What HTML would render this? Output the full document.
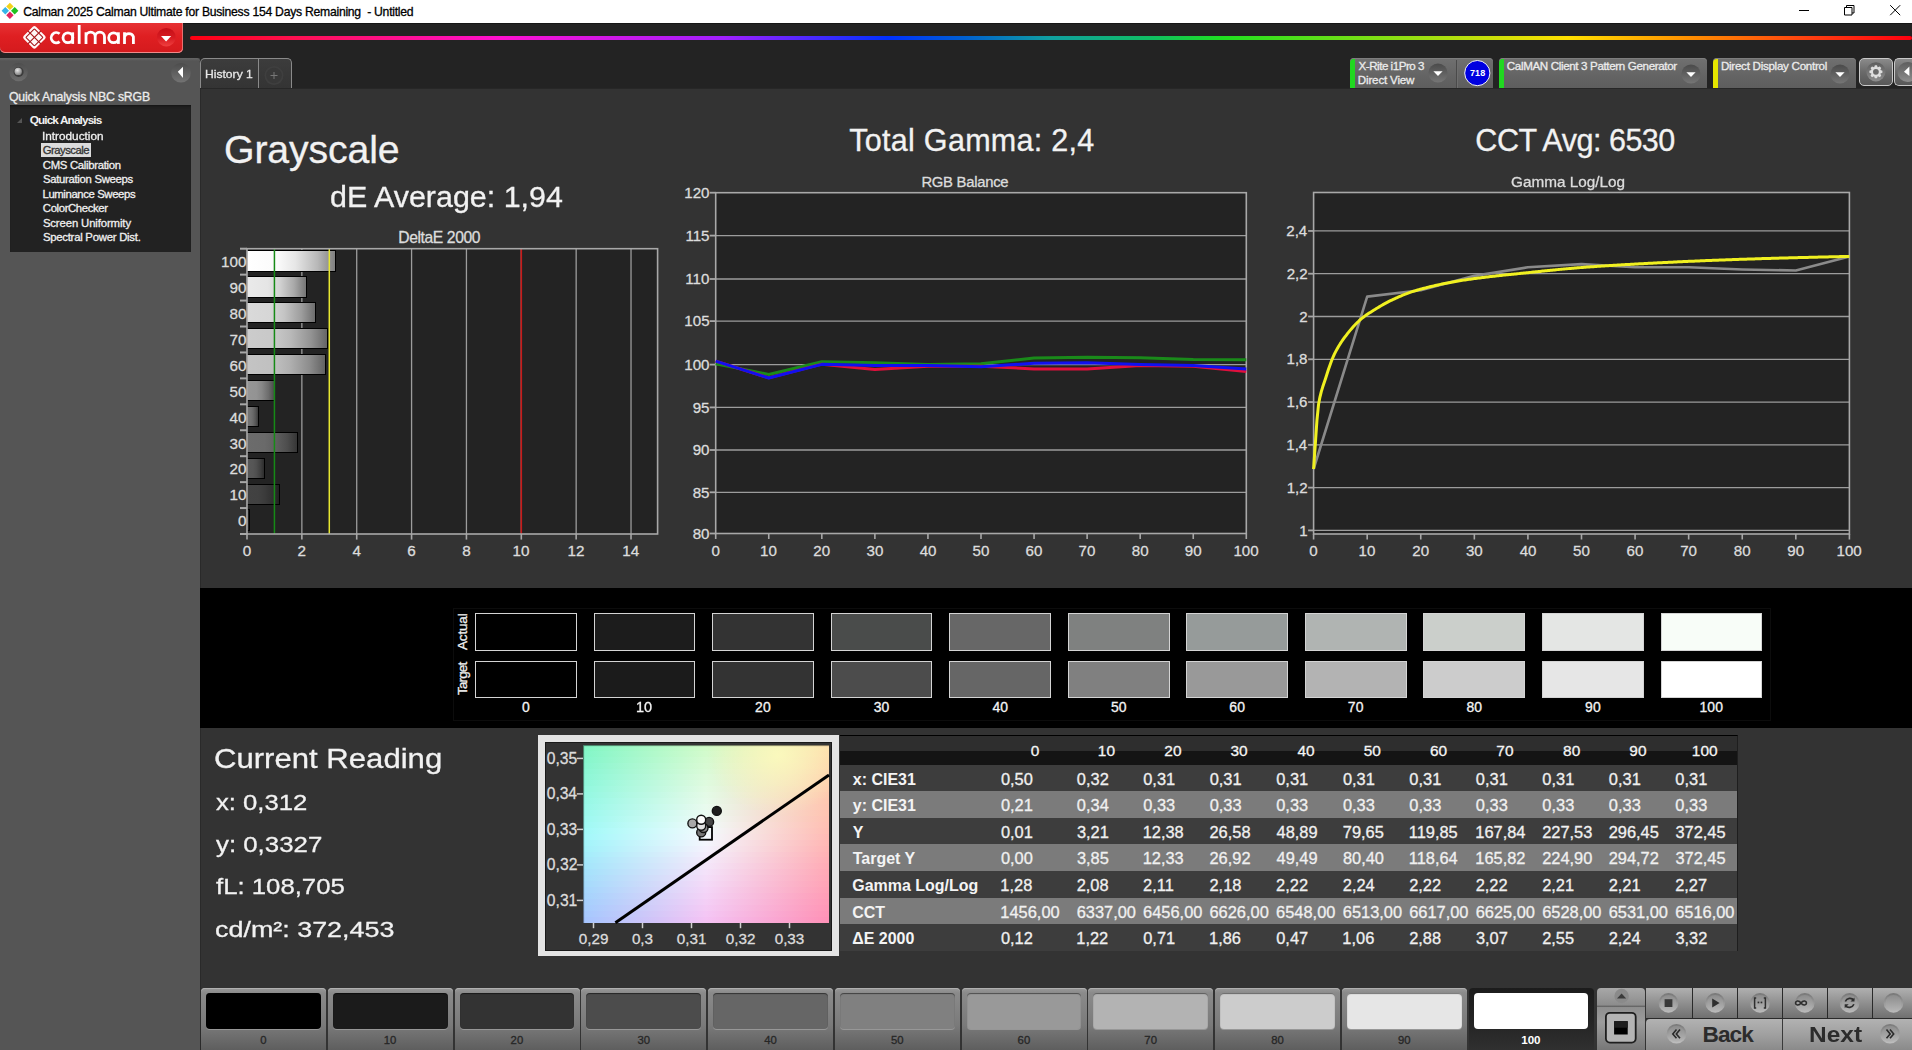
<!DOCTYPE html>
<html><head><meta charset="utf-8">
<style>
*{margin:0;padding:0;box-sizing:border-box}
html,body{width:1912px;height:1050px;overflow:hidden;background:#333;font-family:"Liberation Sans",sans-serif}
body{position:relative}
.a{position:absolute}
.t{position:absolute;white-space:pre;line-height:1;-webkit-text-stroke:0.3px currentColor}
svg{position:absolute;overflow:visible}
</style></head>
<body>

<div class="a" style="left:0;top:0;width:1912px;height:23px;background:#fff"></div>
<svg style="left:0;top:0" width="24" height="23">
<path d="M9.9 2.7 L13.6 6.4 L9.9 10.1 L6.2 6.4Z" fill="#f2d21a"/>
<path d="M5.3 7 L9 10.7 L5.3 14.4 L1.6 10.7Z" fill="#36b4e8"/>
<path d="M14.7 7 L18.4 10.7 L14.7 14.4 L11 10.7Z" fill="#1fc21f"/>
<path d="M9.9 11.6 L13.6 15.3 L9.9 19 L6.2 15.3Z" fill="#e0245e"/>
</svg>
<span class="t" style="left:23.19px;top:6px;font-size:12.20px;color:#000;letter-spacing:-0.258px">Calman 2025 Calman Ultimate for Business 154 Days Remaining  - Untitled</span>
<svg style="left:1780px;top:0" width="132" height="23">
<path d="M19 10.5 H29" stroke="#000" stroke-width="1"/>
<path d="M64.5 7.5 h7.5 v7.5 h-7.5z" fill="none" stroke="#000" stroke-width="1"/>
<path d="M66.5 7.5 v-2 h7.5 v7.5 h-2" fill="none" stroke="#000" stroke-width="1"/>
<path d="M110.2 5.2 L120.2 15.2 M120.2 5.2 L110.2 15.2" stroke="#000" stroke-width="1"/>
</svg>
<div class="a" style="left:0;top:23px;width:1912px;height:35px;background:#232323"></div>
<div class="a" style="left:0;top:23px;width:1912px;height:1px;background:#161616"></div>
<div class="a" style="left:190px;top:35.6px;width:1722px;height:4px;border-radius:2px;background:linear-gradient(90deg,#ff0010 0%,#ff1050 6%,#ff10d0 18%,#a020ff 31%,#0030ff 40.5%,#0060d0 45%,#10a0a0 50%,#10c060 56%,#20e020 60%,#a0e010 72%,#ffe000 80%,#ff9000 87%,#ff4010 94%,#ff0010 100%);filter:blur(0.5px)"></div>
<div class="a" style="left:0;top:23px;width:183px;height:30px;border-radius:0 0 5px 5px;background:linear-gradient(#e63234,#df1f22 45%,#d41a1d 100%);box-shadow:inset 0 -1px 0 #f08a8a,inset -1px 0 0 #e87070"></div>
<svg style="left:0;top:23px" width="183" height="30">
<g transform="translate(34.4,14.4) rotate(45)">
<rect x="-8.6" y="-8.6" width="17.2" height="17.2" rx="2.2" fill="#fff8f8"/>
<rect x="-6.1" y="-6.1" width="12.2" height="12.2" rx="0.8" fill="none" stroke="#a81a1e" stroke-width="1.1"/>
<path d="M0 -9.2 V9.2 M-9.2 0 H9.2" stroke="#a81a1e" stroke-width="1.2"/>
</g>
<g fill="none" stroke="#fff" stroke-width="2.8">
<path d="M59.6 10.8 A5.1 5.1 0 1 0 59.6 18.6"/>
<circle cx="67.9" cy="14.7" r="4.9"/><path d="M72.7 9.3 V20.9"/>
<path d="M79.2 2 V20.9"/>
<path d="M86 20.9 V13.8 A4.6 4.6 0 0 1 95.2 13.8 V20.9 M95.2 13.8 A4.6 4.6 0 0 1 104.5 13.8 V20.9 M86 9.3 V13.8"/>
<circle cx="113.6" cy="14.7" r="4.9"/><path d="M118.4 9.3 V20.9"/>
<path d="M124.5 20.9 V13.8 A4.7 4.7 0 0 1 133.4 13.8 V20.9 M124.5 9.3 V13.8"/>
</g>
<defs><linearGradient id="rdg" x1="0" y1="0" x2="0" y2="1"><stop offset="0" stop-color="#c40e16"/><stop offset="0.55" stop-color="#d81c22"/><stop offset="1" stop-color="#f04040"/></linearGradient></defs>
<circle cx="166.3" cy="14.2" r="9.3" fill="url(#rdg)"/>
<path d="M161 13 H171.2 L166.1 18.6Z" fill="#fff"/>
</svg>
<div class="a" style="left:0;top:58px;width:200px;height:992px;background:#555;border-radius:0 5px 0 0"></div>
<div class="a" style="left:0;top:58px;width:200px;height:3px;border-radius:0 5px 0 0;background:linear-gradient(#666,#555)"></div>
<svg style="left:0;top:58px" width="200" height="30">
<circle cx="18.6" cy="14" r="9.2" fill="url(#lpg)" opacity="0.8"/>
<circle cx="18.6" cy="14" r="5" fill="#3c3c3c"/>
<circle cx="18.2" cy="13.4" r="3.7" fill="url(#ball)"/>
<defs><linearGradient id="lpg" x1="0" y1="0" x2="0" y2="1"><stop offset="0" stop-color="#4c4c4c"/><stop offset="1" stop-color="#737373"/></linearGradient><radialGradient id="ball" cx="40%" cy="35%" r="60%"><stop offset="0" stop-color="#e8e8e8"/><stop offset="1" stop-color="#8a8a8a"/></radialGradient></defs><circle cx="181" cy="14.8" r="9.8" fill="url(#lpg)"/>
<path d="M177.8 10.5 L183 5.5 V16.9Z" fill="#fff" transform="translate(0,3.2)"/>
</svg>
<span class="t" style="left:8.95px;top:91px;font-size:12.30px;color:#ececec;letter-spacing:-0.200px">Quick Analysis NBC sRGB</span>
<div class="a" style="left:9.5px;top:105.3px;width:181px;height:146.4px;background:#222;box-shadow:inset 0 3px 3px -2px #111"></div>
<svg style="left:16px;top:117px" width="8" height="8"><path d="M1 6 L6 6 L6 1Z" fill="#555"/></svg>
<span class="t" style="left:29.73px;top:115px;font-size:11.80px;color:#f2f2f2;font-weight:700;-webkit-text-stroke:0;letter-spacing:-0.892px">Quick Analysis</span>
<div class="a" style="left:41.2px;top:143.1px;width:49.8px;height:14.1px;background:#dcdcdc"></div>
<span class="t" style="left:42.34px;top:131px;font-size:11.34px;color:#f0f0f0;transform-origin:0 0;transform:scaleX(1.0393)">Introduction</span>
<span class="t" style="left:42.83px;top:145px;font-size:11.34px;color:#333;letter-spacing:-0.537px">Grayscale</span>
<span class="t" style="left:42.83px;top:160px;font-size:11.34px;color:#f0f0f0;letter-spacing:-0.306px">CMS Calibration</span>
<span class="t" style="left:42.89px;top:174px;font-size:11.34px;color:#f0f0f0;letter-spacing:-0.298px">Saturation Sweeps</span>
<span class="t" style="left:42.49px;top:189px;font-size:11.34px;color:#f0f0f0;letter-spacing:-0.385px">Luminance Sweeps</span>
<span class="t" style="left:42.83px;top:203px;font-size:11.34px;color:#f0f0f0;letter-spacing:-0.372px">ColorChecker</span>
<span class="t" style="left:42.89px;top:218px;font-size:11.34px;color:#f0f0f0;letter-spacing:-0.116px">Screen Uniformity</span>
<span class="t" style="left:42.89px;top:232px;font-size:11.34px;color:#f0f0f0;letter-spacing:-0.247px">Spectral Power Dist.</span>
<div class="a" style="left:200px;top:58px;width:1712px;height:30px;background:#232323"></div>
<div class="a" style="left:199.8px;top:58px;width:92.2px;height:30px;border:1px solid #8a8a8a;border-bottom:none;border-radius:5px 5px 0 0;background:linear-gradient(#3c3c3c,#343434)"></div>
<div class="a" style="left:258px;top:59px;width:1px;height:29px;background:#8a8a8a"></div>
<span class="t" style="left:205.33px;top:69px;font-size:11.80px;color:#e8e8e8;transform-origin:0 0;transform:scaleX(1.0272)">History 1</span>
<svg style="left:258px;top:58px" width="34" height="30"><circle cx="16" cy="17.5" r="9.5" fill="#3f3f3f"/><circle cx="16" cy="17.5" r="7.8" fill="#383838"/><path d="M16 14 V21 M12.5 17.5 H19.5" stroke="#777" stroke-width="1"/></svg>
<div class="a" style="left:200px;top:88px;width:1712px;height:962px;background:#333"></div>
<div class="a" style="left:200px;top:88px;width:1px;height:962px;background:#2a2a2a"></div>
<div class="a" style="left:200px;top:88px;width:1712px;height:1px;background:#272727"></div>
<div class="a" style="left:1349.5px;top:58px;width:143.0px;height:30px;border-radius:4px 4px 0 0;background:linear-gradient(#707070,#646464 60%,#5e5e5e);box-shadow:inset 0 1px 0 #7e7e7e"></div><div class="a" style="left:1349.5px;top:58.5px;width:5.5px;height:29.5px;border-radius:4px 0 0 0;background:#20d820"></div>
<span class="t" style="left:1358.51px;top:60px;font-size:11.60px;color:#ececec;letter-spacing:-0.474px">X-Rite i1Pro 3</span>
<span class="t" style="left:1357.87px;top:74px;font-size:11.60px;color:#ececec;letter-spacing:-0.184px">Direct View</span>
<svg style="left:1426.5px;top:62px" width="22" height="22"><defs><linearGradient id="dd1437" x1="0" y1="0" x2="0" y2="1"><stop offset="0" stop-color="#4a4a4a"/><stop offset="1" stop-color="#767676"/></linearGradient></defs><circle cx="11" cy="11" r="9.6" fill="url(#dd1437)"/><path d="M6.4 9.3 H15.6 L11 14Z" fill="#fff"/></svg>
<div class="a" style="left:1456px;top:60px;width:1px;height:28px;background:#4a4a4a"></div>
<div class="a" style="left:1457px;top:60px;width:1px;height:28px;background:#6e6e6e"></div>
<svg style="left:1463px;top:59px" width="30" height="28"><circle cx="14.3" cy="14.1" r="12.6" fill="#0000e0" stroke="#f4f4f4" stroke-width="1"/></svg>
<span class="t" style="left:1469.94px;top:69px;font-size:9.01px;color:#fff;font-weight:700;-webkit-text-stroke:0;letter-spacing:0.113px">718</span>
<div class="a" style="left:1498.5px;top:58px;width:208.0px;height:30px;border-radius:4px 4px 0 0;background:linear-gradient(#707070,#646464 60%,#5e5e5e);box-shadow:inset 0 1px 0 #7e7e7e"></div><div class="a" style="left:1498.5px;top:58.5px;width:5.5px;height:29.5px;border-radius:4px 0 0 0;background:#20d820"></div>
<span class="t" style="left:1506.82px;top:60px;font-size:11.60px;color:#ececec;letter-spacing:-0.356px">CalMAN Client 3 Pattern Generator</span>
<svg style="left:1679.5px;top:62.599999999999994px" width="22" height="22"><defs><linearGradient id="dd1690" x1="0" y1="0" x2="0" y2="1"><stop offset="0" stop-color="#4a4a4a"/><stop offset="1" stop-color="#767676"/></linearGradient></defs><circle cx="11" cy="11" r="9.6" fill="url(#dd1690)"/><path d="M6.4 9.3 H15.6 L11 14Z" fill="#fff"/></svg>
<div class="a" style="left:1712.7px;top:58px;width:143.0999999999999px;height:30px;border-radius:4px 4px 0 0;background:linear-gradient(#707070,#646464 60%,#5e5e5e);box-shadow:inset 0 1px 0 #7e7e7e"></div><div class="a" style="left:1712.7px;top:58.5px;width:5.5px;height:29.5px;border-radius:4px 0 0 0;background:#e6e600"></div>
<span class="t" style="left:1720.97px;top:60px;font-size:11.60px;color:#ececec;letter-spacing:-0.276px">Direct Display Control</span>
<svg style="left:1829px;top:62.599999999999994px" width="22" height="22"><defs><linearGradient id="dd1840" x1="0" y1="0" x2="0" y2="1"><stop offset="0" stop-color="#4a4a4a"/><stop offset="1" stop-color="#767676"/></linearGradient></defs><circle cx="11" cy="11" r="9.6" fill="url(#dd1840)"/><path d="M6.4 9.3 H15.6 L11 14Z" fill="#fff"/></svg>
<div class="a" style="left:1859px;top:58px;width:33.5px;height:27.5px;border-radius:5px;border:1.2px solid #c8c8c8;background:linear-gradient(#8a8a8a,#6a6a6a 50%,#585858)"></div>
<svg style="left:1859px;top:58px" width="34" height="28"><defs><linearGradient id="gg" x1="0" y1="0" x2="0" y2="1"><stop offset="0" stop-color="#555"/><stop offset="1" stop-color="#9a9a9a"/></linearGradient></defs><circle cx="16.9" cy="13.8" r="9.6" fill="url(#gg)" opacity="0.8"/><path d="M15.17 9.21 L15.85 7.28 L17.95 7.28 L18.63 9.21 L18.92 9.34 L20.76 8.45 L22.25 9.94 L21.36 11.78 L21.49 12.07 L23.42 12.75 L23.42 14.85 L21.49 15.53 L21.36 15.82 L22.25 17.66 L20.76 19.15 L18.92 18.26 L18.63 18.39 L17.95 20.32 L15.85 20.32 L15.17 18.39 L14.88 18.26 L13.04 19.15 L11.55 17.66 L12.44 15.82 L12.31 15.53 L10.38 14.85 L10.38 12.75 L12.31 12.07 L12.44 11.78 L11.55 9.94 L13.04 8.45 L14.88 9.34Z" fill="#dedede"/><circle cx="16.9" cy="13.8" r="2.9" fill="#6a6a6a"/></svg>
<div class="a" style="left:1893.5px;top:58px;width:22px;height:27.5px;border-radius:5px 0 0 5px;border:1.2px solid #c8c8c8;border-right:none;background:linear-gradient(#8a8a8a,#6a6a6a 50%,#585858)"></div>
<svg style="left:1893px;top:58px" width="19" height="28"><circle cx="14.5" cy="14" r="10" fill="url(#gg)" opacity="0.8"/><path d="M11 13.8 L16.4 8.5 V18Z" fill="#fff"/></svg>
<span class="t" style="left:224.04px;top:130px;font-size:39.24px;color:#f2f2f2;letter-spacing:-0.133px">Grayscale</span>
<span class="t" style="left:329.68px;top:182px;font-size:29.65px;color:#f2f2f2;transform-origin:0 0;transform:scaleX(1.0264)">dE Average: 1,94</span>
<span class="t" style="left:849.29px;top:125px;font-size:30.52px;color:#f2f2f2;letter-spacing:0.276px">Total Gamma: 2,4</span>
<span class="t" style="left:1475.37px;top:125px;font-size:30.52px;color:#f2f2f2;letter-spacing:-0.490px">CCT Avg: 6530</span>
<span class="t" style="left:398.29px;top:230px;font-size:15.70px;color:#dcdcdc;letter-spacing:-0.411px">DeltaE 2000</span>
<svg style="left:0;top:0" width="1912" height="1050"><rect x="247.0" y="248.7" width="410.6" height="285.3" fill="#232323"/><path d="M301.86 248.7 V534.0" stroke="#9c9c9c" stroke-width="1.3"/><path d="M356.72 248.7 V534.0" stroke="#9c9c9c" stroke-width="1.3"/><path d="M411.58 248.7 V534.0" stroke="#9c9c9c" stroke-width="1.3"/><path d="M466.44 248.7 V534.0" stroke="#9c9c9c" stroke-width="1.3"/><path d="M521.30 248.7 V534.0" stroke="#9c9c9c" stroke-width="1.3"/><path d="M576.16 248.7 V534.0" stroke="#9c9c9c" stroke-width="1.3"/><path d="M631.02 248.7 V534.0" stroke="#9c9c9c" stroke-width="1.3"/></svg>
<div class="a" style="left:247.0px;top:509.46px;width:2.70px;height:21.5px;border:1.8px solid #000;border-left:none;background:linear-gradient(90deg,rgb(40,40,40) 0%,rgb(39,39,39) 35%,rgb(36,36,36) 55%,rgb(29,29,29) 80%,rgb(20,20,20) 100%)"></div>
<div class="a" style="left:247.0px;top:483.53px;width:32.50px;height:21.5px;border:1.8px solid #000;border-left:none;background:linear-gradient(90deg,rgb(66,66,66) 0%,rgb(65,65,65) 35%,rgb(59,59,59) 55%,rgb(48,48,48) 80%,rgb(33,33,33) 100%)"></div>
<div class="a" style="left:247.0px;top:457.59px;width:18.10px;height:21.5px;border:1.8px solid #000;border-left:none;background:linear-gradient(90deg,rgb(88,88,88) 0%,rgb(86,86,86) 35%,rgb(79,79,79) 55%,rgb(63,63,63) 80%,rgb(44,44,44) 100%)"></div>
<div class="a" style="left:247.0px;top:431.65px;width:50.70px;height:21.5px;border:1.8px solid #000;border-left:none;background:linear-gradient(90deg,rgb(108,108,108) 0%,rgb(106,106,106) 35%,rgb(97,97,97) 55%,rgb(78,78,78) 80%,rgb(54,54,54) 100%)"></div>
<div class="a" style="left:247.0px;top:405.72px;width:12.30px;height:21.5px;border:1.8px solid #000;border-left:none;background:linear-gradient(90deg,rgb(116,116,116) 0%,rgb(114,114,114) 35%,rgb(104,104,104) 55%,rgb(84,84,84) 80%,rgb(58,58,58) 100%)"></div>
<div class="a" style="left:247.0px;top:379.78px;width:27.70px;height:21.5px;border:1.8px solid #000;border-left:none;background:linear-gradient(90deg,rgb(150,150,150) 0%,rgb(147,147,147) 35%,rgb(135,135,135) 55%,rgb(108,108,108) 80%,rgb(75,75,75) 100%)"></div>
<div class="a" style="left:247.0px;top:353.85px;width:78.50px;height:21.5px;border:1.8px solid #000;border-left:none;background:linear-gradient(90deg,rgb(196,196,196) 0%,rgb(192,192,192) 35%,rgb(176,176,176) 55%,rgb(141,141,141) 80%,rgb(98,98,98) 100%)"></div>
<div class="a" style="left:247.0px;top:327.91px;width:80.50px;height:21.5px;border:1.8px solid #000;border-left:none;background:linear-gradient(90deg,rgb(204,204,204) 0%,rgb(200,200,200) 35%,rgb(184,184,184) 55%,rgb(147,147,147) 80%,rgb(102,102,102) 100%)"></div>
<div class="a" style="left:247.0px;top:301.97px;width:68.50px;height:21.5px;border:1.8px solid #000;border-left:none;background:linear-gradient(90deg,rgb(218,218,218) 0%,rgb(214,214,214) 35%,rgb(196,196,196) 55%,rgb(157,157,157) 80%,rgb(109,109,109) 100%)"></div>
<div class="a" style="left:247.0px;top:276.04px;width:60.30px;height:21.5px;border:1.8px solid #000;border-left:none;background:linear-gradient(90deg,rgb(234,234,234) 0%,rgb(229,229,229) 35%,rgb(211,211,211) 55%,rgb(168,168,168) 80%,rgb(117,117,117) 100%)"></div>
<div class="a" style="left:247.0px;top:250.10px;width:89.10px;height:21.5px;border:1.8px solid #000;border-left:none;background:linear-gradient(90deg,rgb(255,255,255) 0%,rgb(250,250,250) 35%,rgb(230,230,230) 55%,rgb(184,184,184) 80%,rgb(128,128,128) 100%)"></div>
<svg style="left:0;top:0" width="1912" height="1050"><path d="M274.43 248.7 V534.0" stroke="#168a16" stroke-width="1.5"/><path d="M329.29 248.7 V534.0" stroke="#e8e830" stroke-width="1.5"/><path d="M521.30 248.7 V534.0" stroke="#c81a1a" stroke-width="1.6"/><rect x="247.0" y="248.7" width="410.6" height="285.3" fill="none" stroke="#a8a8a8" stroke-width="1.6"/><path d="M240.0 534.00 H247.0" stroke="#a8a8a8" stroke-width="2"/><path d="M240.0 508.06 H247.0" stroke="#a8a8a8" stroke-width="2"/><path d="M240.0 482.13 H247.0" stroke="#a8a8a8" stroke-width="2"/><path d="M240.0 456.19 H247.0" stroke="#a8a8a8" stroke-width="2"/><path d="M240.0 430.25 H247.0" stroke="#a8a8a8" stroke-width="2"/><path d="M240.0 404.32 H247.0" stroke="#a8a8a8" stroke-width="2"/><path d="M240.0 378.38 H247.0" stroke="#a8a8a8" stroke-width="2"/><path d="M240.0 352.45 H247.0" stroke="#a8a8a8" stroke-width="2"/><path d="M240.0 326.51 H247.0" stroke="#a8a8a8" stroke-width="2"/><path d="M240.0 300.57 H247.0" stroke="#a8a8a8" stroke-width="2"/><path d="M240.0 274.64 H247.0" stroke="#a8a8a8" stroke-width="2"/><path d="M240.0 248.70 H247.0" stroke="#a8a8a8" stroke-width="2"/><path d="M247.00 534.0 V539.6" stroke="#a8a8a8" stroke-width="1.6"/><path d="M301.86 534.0 V539.6" stroke="#a8a8a8" stroke-width="1.6"/><path d="M356.72 534.0 V539.6" stroke="#a8a8a8" stroke-width="1.6"/><path d="M411.58 534.0 V539.6" stroke="#a8a8a8" stroke-width="1.6"/><path d="M466.44 534.0 V539.6" stroke="#a8a8a8" stroke-width="1.6"/><path d="M521.30 534.0 V539.6" stroke="#a8a8a8" stroke-width="1.6"/><path d="M576.16 534.0 V539.6" stroke="#a8a8a8" stroke-width="1.6"/><path d="M631.02 534.0 V539.6" stroke="#a8a8a8" stroke-width="1.6"/></svg>
<span class="t" style="left:238.06px;top:513px;font-size:15.26px;color:#dcdcdc">0</span>
<span class="t" style="left:229.59px;top:487px;font-size:15.26px;color:#dcdcdc">10</span>
<span class="t" style="left:229.59px;top:461px;font-size:15.26px;color:#dcdcdc">20</span>
<span class="t" style="left:229.59px;top:436px;font-size:15.26px;color:#dcdcdc">30</span>
<span class="t" style="left:229.59px;top:410px;font-size:15.26px;color:#dcdcdc">40</span>
<span class="t" style="left:229.59px;top:384px;font-size:15.26px;color:#dcdcdc">50</span>
<span class="t" style="left:229.59px;top:358px;font-size:15.26px;color:#dcdcdc">60</span>
<span class="t" style="left:229.59px;top:332px;font-size:15.26px;color:#dcdcdc">70</span>
<span class="t" style="left:229.59px;top:306px;font-size:15.26px;color:#dcdcdc">80</span>
<span class="t" style="left:229.59px;top:280px;font-size:15.26px;color:#dcdcdc">90</span>
<span class="t" style="left:221.12px;top:254px;font-size:15.26px;color:#dcdcdc">100</span>
<span class="t" style="left:242.73px;top:543px;font-size:15.26px;color:#dcdcdc">0</span>
<span class="t" style="left:297.62px;top:543px;font-size:15.26px;color:#dcdcdc">2</span>
<span class="t" style="left:352.52px;top:543px;font-size:15.26px;color:#dcdcdc">4</span>
<span class="t" style="left:407.27px;top:543px;font-size:15.26px;color:#dcdcdc">6</span>
<span class="t" style="left:462.20px;top:543px;font-size:15.26px;color:#dcdcdc">8</span>
<span class="t" style="left:512.52px;top:543px;font-size:15.26px;color:#dcdcdc">10</span>
<span class="t" style="left:567.50px;top:543px;font-size:15.26px;color:#dcdcdc">12</span>
<span class="t" style="left:622.17px;top:543px;font-size:15.26px;color:#dcdcdc">14</span>
<span class="t" style="left:921.41px;top:175px;font-size:14.83px;color:#dcdcdc;letter-spacing:-0.266px">RGB Balance</span>
<svg style="left:0;top:0" width="1912" height="1050"><rect x="715.7" y="192.7" width="530.5999999999999" height="340.8" fill="#232323"/><path d="M715.7 492.30 H1246.3" stroke="#9c9c9c" stroke-width="1.3"/><path d="M715.7 450.00 H1246.3" stroke="#9c9c9c" stroke-width="1.3"/><path d="M715.7 407.40 H1246.3" stroke="#9c9c9c" stroke-width="1.3"/><path d="M715.7 364.60 H1246.3" stroke="#9c9c9c" stroke-width="1.3"/><path d="M715.7 321.10 H1246.3" stroke="#9c9c9c" stroke-width="1.3"/><path d="M715.7 279.00 H1246.3" stroke="#9c9c9c" stroke-width="1.3"/><path d="M715.7 235.60 H1246.3" stroke="#9c9c9c" stroke-width="1.3"/><rect x="715.7" y="192.7" width="530.5999999999999" height="340.8" fill="none" stroke="#a8a8a8" stroke-width="1.6"/><path d="M709.7 533.50 H715.7" stroke="#a8a8a8" stroke-width="1.8"/><path d="M709.7 492.30 H715.7" stroke="#a8a8a8" stroke-width="1.8"/><path d="M709.7 450.00 H715.7" stroke="#a8a8a8" stroke-width="1.8"/><path d="M709.7 407.40 H715.7" stroke="#a8a8a8" stroke-width="1.8"/><path d="M709.7 364.60 H715.7" stroke="#a8a8a8" stroke-width="1.8"/><path d="M709.7 321.10 H715.7" stroke="#a8a8a8" stroke-width="1.8"/><path d="M709.7 279.00 H715.7" stroke="#a8a8a8" stroke-width="1.8"/><path d="M709.7 235.60 H715.7" stroke="#a8a8a8" stroke-width="1.8"/><path d="M709.7 192.70 H715.7" stroke="#a8a8a8" stroke-width="1.8"/><path d="M715.70 533.5 V539.0" stroke="#a8a8a8" stroke-width="1.6"/><path d="M768.76 533.5 V539.0" stroke="#a8a8a8" stroke-width="1.6"/><path d="M821.82 533.5 V539.0" stroke="#a8a8a8" stroke-width="1.6"/><path d="M874.88 533.5 V539.0" stroke="#a8a8a8" stroke-width="1.6"/><path d="M927.94 533.5 V539.0" stroke="#a8a8a8" stroke-width="1.6"/><path d="M981.00 533.5 V539.0" stroke="#a8a8a8" stroke-width="1.6"/><path d="M1034.06 533.5 V539.0" stroke="#a8a8a8" stroke-width="1.6"/><path d="M1087.12 533.5 V539.0" stroke="#a8a8a8" stroke-width="1.6"/><path d="M1140.18 533.5 V539.0" stroke="#a8a8a8" stroke-width="1.6"/><path d="M1193.24 533.5 V539.0" stroke="#a8a8a8" stroke-width="1.6"/><path d="M1246.30 533.5 V539.0" stroke="#a8a8a8" stroke-width="1.6"/><path d="M715.70 363.73 L768.76 374.44 L821.82 361.73 L874.88 362.86 L927.94 364.60 L981.00 363.73 L1034.06 358.08 L1087.12 357.21 L1140.18 357.64 L1193.24 359.38 L1246.30 359.82" fill="none" stroke="#1a8a1a" stroke-width="3" stroke-linejoin="round"/><path d="M715.70 361.12 L768.76 377.87 L821.82 364.17 L874.88 369.39 L927.94 366.31 L981.00 366.31 L1034.06 368.88 L1087.12 368.88 L1140.18 365.46 L1193.24 366.31 L1246.30 371.45" fill="none" stroke="#e0103c" stroke-width="3" stroke-linejoin="round"/><path d="M715.70 361.12 L768.76 378.04 L821.82 364.34 L874.88 365.46 L927.94 365.46 L981.00 366.74 L1034.06 363.29 L1087.12 362.86 L1140.18 364.60 L1193.24 365.46 L1246.30 368.88" fill="none" stroke="#1010f0" stroke-width="3" stroke-linejoin="round"/></svg>
<span class="t" style="left:692.65px;top:526px;font-size:15.12px;color:#dcdcdc">80</span>
<span class="t" style="left:692.73px;top:485px;font-size:15.12px;color:#dcdcdc">85</span>
<span class="t" style="left:692.65px;top:442px;font-size:15.12px;color:#dcdcdc">90</span>
<span class="t" style="left:692.73px;top:400px;font-size:15.12px;color:#dcdcdc">95</span>
<span class="t" style="left:684.26px;top:357px;font-size:15.12px;color:#dcdcdc">100</span>
<span class="t" style="left:684.34px;top:313px;font-size:15.12px;color:#dcdcdc">105</span>
<span class="t" style="left:685.32px;top:271px;font-size:15.12px;color:#dcdcdc">110</span>
<span class="t" style="left:685.39px;top:228px;font-size:15.12px;color:#dcdcdc">115</span>
<span class="t" style="left:684.26px;top:185px;font-size:15.12px;color:#dcdcdc">120</span>
<span class="t" style="left:711.47px;top:543px;font-size:15.12px;color:#dcdcdc">0</span>
<span class="t" style="left:760.07px;top:543px;font-size:15.12px;color:#dcdcdc">10</span>
<span class="t" style="left:813.32px;top:543px;font-size:15.12px;color:#dcdcdc">20</span>
<span class="t" style="left:866.49px;top:543px;font-size:15.12px;color:#dcdcdc">30</span>
<span class="t" style="left:919.66px;top:543px;font-size:15.12px;color:#dcdcdc">40</span>
<span class="t" style="left:972.57px;top:543px;font-size:15.12px;color:#dcdcdc">50</span>
<span class="t" style="left:1025.56px;top:543px;font-size:15.12px;color:#dcdcdc">60</span>
<span class="t" style="left:1078.62px;top:543px;font-size:15.12px;color:#dcdcdc">70</span>
<span class="t" style="left:1131.75px;top:543px;font-size:15.12px;color:#dcdcdc">80</span>
<span class="t" style="left:1184.77px;top:543px;font-size:15.12px;color:#dcdcdc">90</span>
<span class="t" style="left:1233.41px;top:543px;font-size:15.12px;color:#dcdcdc">100</span>
<span class="t" style="left:1511.43px;top:175px;font-size:14.83px;color:#dcdcdc;transform-origin:0 0;transform:scaleX(1.0329)">Gamma Log/Log</span>
<svg style="left:0;top:0" width="1912" height="1050"><rect x="1313.6" y="192.5" width="535.8000000000002" height="341.5" fill="#232323"/><path d="M1313.6 530.40 H1849.4" stroke="#9c9c9c" stroke-width="1.3"/><path d="M1313.6 487.62 H1849.4" stroke="#9c9c9c" stroke-width="1.3"/><path d="M1313.6 444.84 H1849.4" stroke="#9c9c9c" stroke-width="1.3"/><path d="M1313.6 402.06 H1849.4" stroke="#9c9c9c" stroke-width="1.3"/><path d="M1313.6 359.28 H1849.4" stroke="#9c9c9c" stroke-width="1.3"/><path d="M1313.6 316.50 H1849.4" stroke="#9c9c9c" stroke-width="1.3"/><path d="M1313.6 273.72 H1849.4" stroke="#9c9c9c" stroke-width="1.3"/><path d="M1313.6 230.94 H1849.4" stroke="#9c9c9c" stroke-width="1.3"/><rect x="1313.6" y="192.5" width="535.8000000000002" height="341.5" fill="none" stroke="#a8a8a8" stroke-width="1.6"/><path d="M1308.1 530.40 H1313.6" stroke="#a8a8a8" stroke-width="1.8"/><path d="M1308.1 487.62 H1313.6" stroke="#a8a8a8" stroke-width="1.8"/><path d="M1308.1 444.84 H1313.6" stroke="#a8a8a8" stroke-width="1.8"/><path d="M1308.1 402.06 H1313.6" stroke="#a8a8a8" stroke-width="1.8"/><path d="M1308.1 359.28 H1313.6" stroke="#a8a8a8" stroke-width="1.8"/><path d="M1308.1 316.50 H1313.6" stroke="#a8a8a8" stroke-width="1.8"/><path d="M1308.1 273.72 H1313.6" stroke="#a8a8a8" stroke-width="1.8"/><path d="M1308.1 230.94 H1313.6" stroke="#a8a8a8" stroke-width="1.8"/><path d="M1313.60 534.0 V539.5" stroke="#a8a8a8" stroke-width="1.6"/><path d="M1367.18 534.0 V539.5" stroke="#a8a8a8" stroke-width="1.6"/><path d="M1420.76 534.0 V539.5" stroke="#a8a8a8" stroke-width="1.6"/><path d="M1474.34 534.0 V539.5" stroke="#a8a8a8" stroke-width="1.6"/><path d="M1527.92 534.0 V539.5" stroke="#a8a8a8" stroke-width="1.6"/><path d="M1581.50 534.0 V539.5" stroke="#a8a8a8" stroke-width="1.6"/><path d="M1635.08 534.0 V539.5" stroke="#a8a8a8" stroke-width="1.6"/><path d="M1688.66 534.0 V539.5" stroke="#a8a8a8" stroke-width="1.6"/><path d="M1742.24 534.0 V539.5" stroke="#a8a8a8" stroke-width="1.6"/><path d="M1795.82 534.0 V539.5" stroke="#a8a8a8" stroke-width="1.6"/><path d="M1849.40 534.0 V539.5" stroke="#a8a8a8" stroke-width="1.6"/><path d="M1313.60 469.01 L1367.18 296.61 L1420.76 290.19 L1474.34 275.86 L1527.92 267.30 L1581.50 264.09 L1635.08 267.30 L1688.66 267.30 L1742.24 269.44 L1795.82 270.51 L1849.40 256.39" fill="none" stroke="#8a8a8a" stroke-width="2.6" stroke-linejoin="round"/><path d="M1313.60 469.01 L1315.26 444.80 L1316.92 420.59 L1318.58 404.20 L1319.94 397.09 L1321.30 391.57 L1322.67 387.08 L1324.03 383.06 L1325.39 378.96 L1326.91 374.18 L1328.42 369.56 L1329.94 365.15 L1331.46 361.03 L1332.98 357.27 L1334.50 353.93 L1335.94 351.10 L1337.38 348.46 L1338.82 345.99 L1340.26 343.67 L1341.70 341.49 L1343.14 339.42 L1344.58 337.44 L1346.02 335.54 L1347.45 333.69 L1348.89 331.89 L1350.33 330.15 L1351.76 328.47 L1353.20 326.84 L1354.64 325.28 L1356.07 323.77 L1357.51 322.34 L1358.95 320.96 L1360.39 319.66 L1361.82 318.43 L1363.30 317.24 L1364.77 316.12 L1366.24 315.06 L1367.72 314.05 L1369.19 313.08 L1370.66 312.14 L1372.14 311.22 L1373.61 310.30 L1375.01 309.42 L1376.41 308.56 L1377.81 307.71 L1379.21 306.86 L1380.62 306.03 L1382.02 305.21 L1383.42 304.41 L1384.82 303.63 L1386.22 302.87 L1387.62 302.12 L1389.02 301.40 L1390.43 300.70 L1391.83 300.03 L1393.18 299.40 L1394.54 298.77 L1395.89 298.15 L1397.25 297.54 L1398.60 296.93 L1399.96 296.34 L1401.31 295.77 L1402.67 295.20 L1404.02 294.65 L1405.38 294.11 L1406.73 293.59 L1408.09 293.08 L1409.45 292.59 L1410.80 292.12 L1412.16 291.67 L1413.51 291.24 L1414.87 290.83 L1416.22 290.44 L1417.57 290.05 L1418.93 289.67 L1420.28 289.29 L1421.64 288.92 L1422.99 288.56 L1424.35 288.20 L1425.70 287.85 L1427.06 287.50 L1428.41 287.16 L1429.76 286.83 L1431.12 286.50 L1432.47 286.17 L1433.83 285.86 L1435.18 285.54 L1436.54 285.24 L1437.89 284.93 L1439.25 284.64 L1440.60 284.35 L1441.95 284.06 L1443.31 283.78 L1444.66 283.50 L1446.02 283.23 L1447.37 282.96 L1448.73 282.70 L1450.08 282.45 L1451.43 282.20 L1452.79 281.95 L1454.14 281.71 L1455.50 281.47 L1456.85 281.24 L1458.21 281.01 L1459.56 280.78 L1460.92 280.56 L1462.27 280.35 L1463.62 280.14 L1464.96 279.93 L1466.30 279.73 L1467.64 279.53 L1468.98 279.34 L1470.32 279.15 L1471.66 278.96 L1473.00 278.77 L1474.34 278.59 L1475.68 278.41 L1477.02 278.23 L1478.36 278.06 L1479.70 277.89 L1481.04 277.72 L1482.38 277.55 L1483.72 277.39 L1485.06 277.23 L1486.40 277.07 L1487.73 276.91 L1489.07 276.75 L1490.41 276.60 L1491.75 276.44 L1493.09 276.29 L1494.43 276.14 L1495.77 276.00 L1497.11 275.85 L1498.45 275.70 L1499.79 275.56 L1501.13 275.42 L1502.47 275.28 L1503.81 275.13 L1505.15 274.99 L1506.49 274.86 L1507.83 274.72 L1509.17 274.58 L1510.51 274.44 L1511.85 274.30 L1513.19 274.17 L1514.53 274.03 L1515.86 273.89 L1517.20 273.76 L1518.54 273.62 L1519.88 273.48 L1521.22 273.34 L1522.56 273.21 L1523.90 273.07 L1525.24 272.93 L1526.58 272.79 L1527.92 272.65 L1529.26 272.51 L1530.60 272.37 L1531.94 272.23 L1533.28 272.09 L1534.62 271.95 L1535.96 271.81 L1537.30 271.67 L1538.64 271.53 L1539.98 271.39 L1541.32 271.25 L1542.65 271.11 L1543.99 270.97 L1545.33 270.84 L1546.67 270.70 L1548.01 270.56 L1549.35 270.43 L1550.69 270.29 L1552.03 270.16 L1553.37 270.03 L1554.71 269.90 L1556.05 269.76 L1557.39 269.63 L1558.73 269.50 L1560.07 269.38 L1561.41 269.25 L1562.75 269.12 L1564.09 269.00 L1565.43 268.88 L1566.77 268.75 L1568.11 268.63 L1569.44 268.51 L1570.78 268.40 L1572.12 268.28 L1573.46 268.17 L1574.80 268.05 L1576.14 267.94 L1577.48 267.83 L1578.82 267.73 L1580.16 267.62 L1581.50 267.52 L1582.84 267.41 L1584.18 267.31 L1585.52 267.21 L1586.86 267.12 L1588.20 267.02 L1589.54 266.92 L1590.88 266.83 L1592.22 266.73 L1593.56 266.64 L1594.89 266.54 L1596.23 266.45 L1597.57 266.36 L1598.91 266.27 L1600.25 266.18 L1601.59 266.09 L1602.93 266.01 L1604.27 265.92 L1605.61 265.83 L1606.95 265.75 L1608.29 265.66 L1609.63 265.58 L1610.97 265.50 L1612.31 265.42 L1613.65 265.33 L1614.99 265.25 L1616.33 265.17 L1617.67 265.09 L1619.01 265.01 L1620.35 264.93 L1621.68 264.86 L1623.02 264.78 L1624.36 264.70 L1625.70 264.62 L1627.04 264.55 L1628.38 264.47 L1629.72 264.39 L1631.06 264.32 L1632.40 264.24 L1633.74 264.17 L1635.08 264.09 L1636.42 264.02 L1637.76 263.95 L1639.10 263.87 L1640.44 263.80 L1641.78 263.73 L1643.12 263.65 L1644.46 263.58 L1645.80 263.51 L1647.14 263.44 L1648.48 263.36 L1649.81 263.29 L1651.15 263.22 L1652.49 263.15 L1653.83 263.08 L1655.17 263.01 L1656.51 262.94 L1657.85 262.87 L1659.19 262.80 L1660.53 262.73 L1661.87 262.66 L1663.21 262.60 L1664.55 262.53 L1665.89 262.46 L1667.23 262.39 L1668.57 262.33 L1669.91 262.26 L1671.25 262.19 L1672.59 262.13 L1673.93 262.06 L1675.27 262.00 L1676.60 261.93 L1677.94 261.87 L1679.28 261.81 L1680.62 261.74 L1681.96 261.68 L1683.30 261.62 L1684.64 261.55 L1685.98 261.49 L1687.32 261.43 L1688.66 261.37 L1690.00 261.31 L1691.34 261.25 L1692.68 261.19 L1694.02 261.13 L1695.36 261.07 L1696.70 261.01 L1698.04 260.96 L1699.38 260.90 L1700.72 260.84 L1702.06 260.79 L1703.39 260.73 L1704.73 260.68 L1706.07 260.62 L1707.41 260.57 L1708.75 260.51 L1710.09 260.46 L1711.43 260.41 L1712.77 260.35 L1714.11 260.30 L1715.45 260.25 L1716.79 260.20 L1718.13 260.14 L1719.47 260.09 L1720.81 260.04 L1722.15 259.99 L1723.49 259.94 L1724.83 259.89 L1726.17 259.84 L1727.51 259.79 L1728.85 259.75 L1730.18 259.70 L1731.52 259.65 L1732.86 259.60 L1734.20 259.55 L1735.54 259.51 L1736.88 259.46 L1738.22 259.41 L1739.56 259.37 L1740.90 259.32 L1742.24 259.27 L1743.58 259.23 L1744.92 259.18 L1746.26 259.14 L1747.60 259.09 L1748.94 259.05 L1750.28 259.01 L1751.62 258.96 L1752.96 258.92 L1754.30 258.88 L1755.63 258.83 L1756.97 258.79 L1758.31 258.75 L1759.65 258.71 L1760.99 258.66 L1762.33 258.62 L1763.67 258.58 L1765.01 258.54 L1766.35 258.50 L1767.69 258.46 L1769.03 258.42 L1770.37 258.38 L1771.71 258.34 L1773.05 258.30 L1774.39 258.26 L1775.73 258.22 L1777.07 258.18 L1778.41 258.14 L1779.75 258.11 L1781.09 258.07 L1782.43 258.03 L1783.76 257.99 L1785.10 257.96 L1786.44 257.92 L1787.78 257.88 L1789.12 257.85 L1790.46 257.81 L1791.80 257.78 L1793.14 257.74 L1794.48 257.71 L1795.82 257.67 L1797.16 257.64 L1798.50 257.61 L1799.84 257.57 L1801.18 257.54 L1802.52 257.51 L1803.86 257.47 L1805.20 257.44 L1806.54 257.41 L1807.88 257.38 L1809.22 257.34 L1810.55 257.31 L1811.89 257.28 L1813.23 257.25 L1814.57 257.22 L1815.91 257.18 L1817.25 257.15 L1818.59 257.12 L1819.93 257.09 L1821.27 257.06 L1822.61 257.03 L1823.95 257.00 L1825.29 256.97 L1826.63 256.93 L1827.97 256.90 L1829.31 256.87 L1830.65 256.84 L1831.99 256.81 L1833.33 256.78 L1834.67 256.75 L1836.01 256.72 L1837.34 256.68 L1838.68 256.65 L1840.02 256.62 L1841.36 256.59 L1842.70 256.56 L1844.04 256.52 L1845.38 256.49 L1846.72 256.46 L1848.06 256.43 L1849.40 256.39" fill="none" stroke="#f0f020" stroke-width="3" stroke-linejoin="round"/></svg>
<span class="t" style="left:1299.19px;top:523px;font-size:15.12px;color:#dcdcdc">1</span>
<span class="t" style="left:1286.64px;top:480px;font-size:15.12px;color:#dcdcdc">1,2</span>
<span class="t" style="left:1286.27px;top:437px;font-size:15.12px;color:#dcdcdc">1,4</span>
<span class="t" style="left:1286.49px;top:394px;font-size:15.12px;color:#dcdcdc">1,6</span>
<span class="t" style="left:1286.49px;top:351px;font-size:15.12px;color:#dcdcdc">1,8</span>
<span class="t" style="left:1299.27px;top:309px;font-size:15.12px;color:#dcdcdc">2</span>
<span class="t" style="left:1286.64px;top:266px;font-size:15.12px;color:#dcdcdc">2,2</span>
<span class="t" style="left:1286.27px;top:223px;font-size:15.12px;color:#dcdcdc">2,4</span>
<span class="t" style="left:1309.37px;top:543px;font-size:15.12px;color:#dcdcdc">0</span>
<span class="t" style="left:1358.49px;top:543px;font-size:15.12px;color:#dcdcdc">10</span>
<span class="t" style="left:1412.26px;top:543px;font-size:15.12px;color:#dcdcdc">20</span>
<span class="t" style="left:1465.95px;top:543px;font-size:15.12px;color:#dcdcdc">30</span>
<span class="t" style="left:1519.64px;top:543px;font-size:15.12px;color:#dcdcdc">40</span>
<span class="t" style="left:1573.07px;top:543px;font-size:15.12px;color:#dcdcdc">50</span>
<span class="t" style="left:1626.58px;top:543px;font-size:15.12px;color:#dcdcdc">60</span>
<span class="t" style="left:1680.16px;top:543px;font-size:15.12px;color:#dcdcdc">70</span>
<span class="t" style="left:1733.81px;top:543px;font-size:15.12px;color:#dcdcdc">80</span>
<span class="t" style="left:1787.35px;top:543px;font-size:15.12px;color:#dcdcdc">90</span>
<span class="t" style="left:1836.51px;top:543px;font-size:15.12px;color:#dcdcdc">100</span>
<div class="a" style="left:200px;top:587.5px;width:1712px;height:140px;background:#000"></div>
<div class="a" style="left:453px;top:607.5px;width:1318px;height:113px;border:1px solid #0c0c0c"></div>
<div class="a" style="left:475.00px;top:613.3px;width:101.8px;height:37.4px;border:1.5px solid #d4d4d4;background:#000000"></div>
<div class="a" style="left:475.00px;top:661.3px;width:101.8px;height:36.4px;border:1.5px solid #d4d4d4;background:#000000"></div>
<span class="t" style="left:521.99px;top:701px;font-size:13.95px;color:#f4f4f4">0</span>
<div class="a" style="left:593.56px;top:613.3px;width:101.8px;height:37.4px;border:1.5px solid #d4d4d4;background:#1c1c1c"></div>
<div class="a" style="left:593.56px;top:661.3px;width:101.8px;height:36.4px;border:1.5px solid #d4d4d4;background:#1b1b1b"></div>
<span class="t" style="left:636.12px;top:701px;font-size:13.95px;color:#f4f4f4;transform-origin:0 0;transform:scaleX(1.0392)">10</span>
<div class="a" style="left:712.12px;top:613.3px;width:101.8px;height:37.4px;border:1.5px solid #d4d4d4;background:#333333"></div>
<div class="a" style="left:712.12px;top:661.3px;width:101.8px;height:36.4px;border:1.5px solid #d4d4d4;background:#333333"></div>
<span class="t" style="left:755.07px;top:701px;font-size:13.95px;color:#f4f4f4;letter-spacing:0.198px">20</span>
<div class="a" style="left:830.68px;top:613.3px;width:101.8px;height:37.4px;border:1.5px solid #d4d4d4;background:#4a4c4b"></div>
<div class="a" style="left:830.68px;top:661.3px;width:101.8px;height:36.4px;border:1.5px solid #d4d4d4;background:#4c4c4c"></div>
<span class="t" style="left:873.84px;top:701px;font-size:13.95px;color:#f4f4f4;letter-spacing:-0.012px">30</span>
<div class="a" style="left:949.24px;top:613.3px;width:101.8px;height:37.4px;border:1.5px solid #d4d4d4;background:#676767"></div>
<div class="a" style="left:949.24px;top:661.3px;width:101.8px;height:36.4px;border:1.5px solid #d4d4d4;background:#666666"></div>
<span class="t" style="left:992.61px;top:701px;font-size:13.95px;color:#f4f4f4;letter-spacing:-0.221px">40</span>
<div class="a" style="left:1067.80px;top:613.3px;width:101.8px;height:37.4px;border:1.5px solid #d4d4d4;background:#7f8180"></div>
<div class="a" style="left:1067.80px;top:661.3px;width:101.8px;height:36.4px;border:1.5px solid #d4d4d4;background:#808080"></div>
<span class="t" style="left:1110.89px;top:701px;font-size:13.95px;color:#f4f4f4;letter-spacing:0.058px">50</span>
<div class="a" style="left:1186.36px;top:613.3px;width:101.8px;height:37.4px;border:1.5px solid #d4d4d4;background:#969b9a"></div>
<div class="a" style="left:1186.36px;top:661.3px;width:101.8px;height:36.4px;border:1.5px solid #d4d4d4;background:#999999"></div>
<span class="t" style="left:1229.31px;top:701px;font-size:13.95px;color:#f4f4f4;letter-spacing:0.198px">60</span>
<div class="a" style="left:1304.92px;top:613.3px;width:101.8px;height:37.4px;border:1.5px solid #d4d4d4;background:#b0b4b2"></div>
<div class="a" style="left:1304.92px;top:661.3px;width:101.8px;height:36.4px;border:1.5px solid #d4d4d4;background:#b3b3b3"></div>
<span class="t" style="left:1347.87px;top:701px;font-size:13.95px;color:#f4f4f4;letter-spacing:0.198px">70</span>
<div class="a" style="left:1423.48px;top:613.3px;width:101.8px;height:37.4px;border:1.5px solid #d4d4d4;background:#cbcfcb"></div>
<div class="a" style="left:1423.48px;top:661.3px;width:101.8px;height:36.4px;border:1.5px solid #d4d4d4;background:#cccccc"></div>
<span class="t" style="left:1466.57px;top:701px;font-size:13.95px;color:#f4f4f4;letter-spacing:0.058px">80</span>
<div class="a" style="left:1542.04px;top:613.3px;width:101.8px;height:37.4px;border:1.5px solid #d4d4d4;background:#e4e6e4"></div>
<div class="a" style="left:1542.04px;top:661.3px;width:101.8px;height:36.4px;border:1.5px solid #d4d4d4;background:#e6e6e6"></div>
<span class="t" style="left:1585.06px;top:701px;font-size:13.95px;color:#f4f4f4;letter-spacing:0.128px">90</span>
<div class="a" style="left:1660.60px;top:613.3px;width:101.8px;height:37.4px;border:1.5px solid #d4d4d4;background:#f8fdf8"></div>
<div class="a" style="left:1660.60px;top:661.3px;width:101.8px;height:36.4px;border:1.5px solid #d4d4d4;background:#ffffff"></div>
<span class="t" style="left:1699.55px;top:701px;font-size:13.95px;color:#f4f4f4;letter-spacing:0.051px">100</span>
<span class="t" style="left:0.00px;top:-11px;font-size:13.52px;color:#f0f0f0;letter-spacing:-0.186px;transform-origin:0 0;transform:translate(455.5px,650px) rotate(-90deg);left:0;top:0">Actual</span>
<span class="t" style="left:-0.27px;top:-11px;font-size:13.52px;color:#f0f0f0;letter-spacing:-0.855px;transform-origin:0 0;transform:translate(455.5px,695px) rotate(-90deg);left:0;top:0">Target</span>
<span class="t" style="left:214.34px;top:744px;font-size:28.34px;color:#f2f2f2;transform-origin:0 0;transform:scaleX(1.0978)">Current Reading</span>
<span class="t" style="left:215.64px;top:791px;font-size:22.82px;color:#f2f2f2;transform-origin:0 0;transform:scaleX(1.1247)">x: 0,312</span>
<span class="t" style="left:215.90px;top:833px;font-size:22.82px;color:#f2f2f2;transform-origin:0 0;transform:scaleX(1.1319)">y: 0,3327</span>
<span class="t" style="left:215.51px;top:875px;font-size:22.82px;color:#f2f2f2;transform-origin:0 0;transform:scaleX(1.1279)">fL: 108,705</span>
<span class="t" style="left:214.82px;top:918px;font-size:22.82px;color:#f2f2f2;transform-origin:0 0;transform:scaleX(1.1790)">cd/m²: 372,453</span>
<div class="a" style="left:537.7px;top:734.9px;width:301.1px;height:220.7px;background:#e4e4e4"></div>
<div class="a" style="left:544.9px;top:742px;width:287.4px;height:209.2px;background:#333;box-shadow:inset 0 0 0 1px #1a1a1a"></div>
<div class="a" style="left:583.0px;top:744.8px;width:246.0px;height:177.9000000000001px;overflow:hidden"><div class="a" style="left:0;top:0.00px;width:100%;height:6.53px;background:linear-gradient(90deg,rgb(129,246,197) 0%,rgb(145,247,198) 10%,rgb(161,248,199) 20%,rgb(177,249,200) 30%,rgb(193,250,201) 40%,rgb(209,251,201) 50%,rgb(218,244,195) 60%,rgb(227,238,189) 70%,rgb(236,231,182) 80%,rgb(245,225,176) 90%,rgb(255,218,170) 100%)"></div><div class="a" style="left:0;top:5.93px;width:100%;height:6.53px;background:linear-gradient(90deg,rgb(131,246,201) 0%,rgb(147,247,202) 10%,rgb(163,248,203) 20%,rgb(179,249,203) 30%,rgb(195,250,204) 40%,rgb(211,251,205) 50%,rgb(220,244,198) 60%,rgb(228,237,191) 70%,rgb(237,230,184) 80%,rgb(246,223,177) 90%,rgb(255,216,171) 100%)"></div><div class="a" style="left:0;top:11.86px;width:100%;height:6.53px;background:linear-gradient(90deg,rgb(133,246,205) 0%,rgb(149,247,205) 10%,rgb(165,248,206) 20%,rgb(181,249,207) 30%,rgb(197,250,208) 40%,rgb(214,251,209) 50%,rgb(222,243,201) 60%,rgb(230,236,194) 70%,rgb(238,229,186) 80%,rgb(246,221,179) 90%,rgb(255,214,171) 100%)"></div><div class="a" style="left:0;top:17.79px;width:100%;height:6.53px;background:linear-gradient(90deg,rgb(135,246,208) 0%,rgb(152,247,209) 10%,rgb(168,248,210) 20%,rgb(184,249,211) 30%,rgb(200,250,211) 40%,rgb(216,251,212) 50%,rgb(224,243,204) 60%,rgb(231,235,196) 70%,rgb(239,227,188) 80%,rgb(247,220,180) 90%,rgb(255,212,172) 100%)"></div><div class="a" style="left:0;top:23.72px;width:100%;height:6.53px;background:linear-gradient(90deg,rgb(138,247,212) 0%,rgb(154,247,213) 10%,rgb(170,248,213) 20%,rgb(186,249,214) 30%,rgb(202,250,215) 40%,rgb(218,251,216) 50%,rgb(226,242,207) 60%,rgb(233,234,199) 70%,rgb(240,226,190) 80%,rgb(247,218,181) 90%,rgb(255,210,173) 100%)"></div><div class="a" style="left:0;top:29.65px;width:100%;height:6.53px;background:linear-gradient(90deg,rgb(140,247,215) 0%,rgb(156,248,216) 10%,rgb(172,248,217) 20%,rgb(188,249,218) 30%,rgb(205,250,219) 40%,rgb(221,251,220) 50%,rgb(227,242,210) 60%,rgb(234,233,201) 70%,rgb(241,225,192) 80%,rgb(248,216,182) 90%,rgb(255,208,173) 100%)"></div><div class="a" style="left:0;top:35.58px;width:100%;height:6.53px;background:linear-gradient(90deg,rgb(142,247,219) 0%,rgb(158,248,220) 10%,rgb(175,249,221) 20%,rgb(191,249,222) 30%,rgb(207,250,222) 40%,rgb(223,251,223) 50%,rgb(229,242,213) 60%,rgb(236,233,204) 70%,rgb(242,224,194) 80%,rgb(248,215,184) 90%,rgb(255,206,174) 100%)"></div><div class="a" style="left:0;top:41.51px;width:100%;height:6.53px;background:linear-gradient(90deg,rgb(145,248,223) 0%,rgb(161,248,223) 10%,rgb(177,249,224) 20%,rgb(193,249,225) 30%,rgb(209,250,226) 40%,rgb(226,251,227) 50%,rgb(231,241,217) 60%,rgb(237,232,206) 70%,rgb(243,222,196) 80%,rgb(249,213,185) 90%,rgb(255,204,175) 100%)"></div><div class="a" style="left:0;top:47.44px;width:100%;height:6.53px;background:linear-gradient(90deg,rgb(147,248,226) 0%,rgb(163,248,227) 10%,rgb(179,249,228) 20%,rgb(195,249,229) 30%,rgb(212,250,230) 40%,rgb(228,251,231) 50%,rgb(233,241,220) 60%,rgb(239,231,208) 70%,rgb(244,221,197) 80%,rgb(249,211,186) 90%,rgb(255,201,175) 100%)"></div><div class="a" style="left:0;top:53.37px;width:100%;height:6.53px;background:linear-gradient(90deg,rgb(149,248,230) 0%,rgb(165,249,231) 10%,rgb(182,249,232) 20%,rgb(198,250,232) 30%,rgb(214,250,233) 40%,rgb(230,251,234) 50%,rgb(235,240,223) 60%,rgb(240,230,211) 70%,rgb(245,220,199) 80%,rgb(250,209,188) 90%,rgb(255,199,176) 100%)"></div><div class="a" style="left:0;top:59.30px;width:100%;height:6.53px;background:linear-gradient(90deg,rgb(151,248,233) 0%,rgb(168,249,234) 10%,rgb(184,249,235) 20%,rgb(200,250,236) 30%,rgb(216,250,237) 40%,rgb(233,251,238) 50%,rgb(237,240,226) 60%,rgb(241,229,213) 70%,rgb(246,218,201) 80%,rgb(250,208,189) 90%,rgb(255,197,177) 100%)"></div><div class="a" style="left:0;top:65.23px;width:100%;height:6.53px;background:linear-gradient(90deg,rgb(154,249,237) 0%,rgb(170,249,238) 10%,rgb(186,249,239) 20%,rgb(202,250,240) 30%,rgb(219,250,241) 40%,rgb(235,251,242) 50%,rgb(239,239,229) 60%,rgb(243,228,216) 70%,rgb(247,217,203) 80%,rgb(251,206,190) 90%,rgb(255,195,177) 100%)"></div><div class="a" style="left:0;top:71.16px;width:100%;height:6.53px;background:linear-gradient(90deg,rgb(156,249,241) 0%,rgb(172,249,241) 10%,rgb(189,250,242) 20%,rgb(205,250,243) 30%,rgb(221,250,244) 40%,rgb(238,251,245) 50%,rgb(241,239,232) 60%,rgb(244,227,218) 70%,rgb(248,216,205) 80%,rgb(251,204,191) 90%,rgb(255,193,178) 100%)"></div><div class="a" style="left:0;top:77.09px;width:100%;height:6.53px;background:linear-gradient(90deg,rgb(158,249,244) 0%,rgb(174,249,245) 10%,rgb(191,250,246) 20%,rgb(207,250,247) 30%,rgb(224,250,248) 40%,rgb(240,251,249) 50%,rgb(243,239,235) 60%,rgb(246,227,221) 70%,rgb(249,215,207) 80%,rgb(252,203,193) 90%,rgb(255,191,179) 100%)"></div><div class="a" style="left:0;top:83.02px;width:100%;height:6.53px;background:linear-gradient(90deg,rgb(160,249,248) 0%,rgb(177,250,249) 10%,rgb(193,250,250) 20%,rgb(210,250,251) 30%,rgb(226,250,252) 40%,rgb(242,251,253) 50%,rgb(245,238,238) 60%,rgb(247,226,223) 70%,rgb(250,213,209) 80%,rgb(252,201,194) 90%,rgb(255,189,179) 100%)"></div><div class="a" style="left:0;top:88.95px;width:100%;height:6.53px;background:linear-gradient(90deg,rgb(162,248,250) 0%,rgb(178,248,251) 10%,rgb(194,248,251) 20%,rgb(211,248,252) 30%,rgb(227,248,253) 40%,rgb(244,249,254) 50%,rgb(246,236,239) 60%,rgb(248,224,224) 70%,rgb(250,211,209) 80%,rgb(252,199,195) 90%,rgb(255,186,180) 100%)"></div><div class="a" style="left:0;top:94.88px;width:100%;height:6.53px;background:linear-gradient(90deg,rgb(162,244,250) 0%,rgb(178,244,251) 10%,rgb(195,244,251) 20%,rgb(211,245,252) 30%,rgb(227,245,253) 40%,rgb(244,245,253) 50%,rgb(246,232,239) 60%,rgb(248,220,224) 70%,rgb(250,208,209) 80%,rgb(252,195,195) 90%,rgb(255,183,180) 100%)"></div><div class="a" style="left:0;top:100.81px;width:100%;height:6.53px;background:linear-gradient(90deg,rgb(162,241,250) 0%,rgb(178,241,251) 10%,rgb(195,241,251) 20%,rgb(211,241,252) 30%,rgb(227,241,252) 40%,rgb(244,241,253) 50%,rgb(246,229,238) 60%,rgb(248,217,224) 70%,rgb(250,205,209) 80%,rgb(252,192,195) 90%,rgb(255,180,180) 100%)"></div><div class="a" style="left:0;top:106.74px;width:100%;height:6.53px;background:linear-gradient(90deg,rgb(162,237,251) 0%,rgb(179,237,251) 10%,rgb(195,237,251) 20%,rgb(211,237,251) 30%,rgb(227,237,252) 40%,rgb(244,237,252) 50%,rgb(246,225,238) 60%,rgb(248,213,223) 70%,rgb(250,201,209) 80%,rgb(252,189,195) 90%,rgb(255,177,180) 100%)"></div><div class="a" style="left:0;top:112.67px;width:100%;height:6.53px;background:linear-gradient(90deg,rgb(163,233,251) 0%,rgb(179,233,251) 10%,rgb(195,233,251) 20%,rgb(211,233,251) 30%,rgb(227,233,251) 40%,rgb(244,233,251) 50%,rgb(246,222,237) 60%,rgb(248,210,223) 70%,rgb(250,198,209) 80%,rgb(252,186,195) 90%,rgb(255,174,181) 100%)"></div><div class="a" style="left:0;top:118.60px;width:100%;height:6.53px;background:linear-gradient(90deg,rgb(163,230,251) 0%,rgb(179,230,251) 10%,rgb(195,230,251) 20%,rgb(211,230,251) 30%,rgb(227,230,251) 40%,rgb(244,230,250) 50%,rgb(246,218,237) 60%,rgb(248,206,223) 70%,rgb(250,195,209) 80%,rgb(252,183,195) 90%,rgb(255,171,181) 100%)"></div><div class="a" style="left:0;top:124.53px;width:100%;height:6.53px;background:linear-gradient(90deg,rgb(163,226,252) 0%,rgb(179,226,251) 10%,rgb(195,226,251) 20%,rgb(211,226,251) 30%,rgb(227,226,250) 40%,rgb(244,226,250) 50%,rgb(246,214,236) 60%,rgb(248,203,222) 70%,rgb(250,191,209) 80%,rgb(252,180,195) 90%,rgb(255,168,181) 100%)"></div><div class="a" style="left:0;top:130.46px;width:100%;height:6.53px;background:linear-gradient(90deg,rgb(164,223,252) 0%,rgb(180,222,251) 10%,rgb(196,222,251) 20%,rgb(212,222,250) 30%,rgb(228,222,250) 40%,rgb(244,222,249) 50%,rgb(246,211,236) 60%,rgb(248,199,222) 70%,rgb(250,188,209) 80%,rgb(252,177,195) 90%,rgb(255,166,182) 100%)"></div><div class="a" style="left:0;top:136.39px;width:100%;height:6.53px;background:linear-gradient(90deg,rgb(164,219,252) 0%,rgb(180,219,252) 10%,rgb(196,219,251) 20%,rgb(212,218,250) 30%,rgb(228,218,249) 40%,rgb(244,218,248) 50%,rgb(246,207,235) 60%,rgb(248,196,222) 70%,rgb(250,185,208) 80%,rgb(252,174,195) 90%,rgb(255,163,182) 100%)"></div><div class="a" style="left:0;top:142.32px;width:100%;height:6.53px;background:linear-gradient(90deg,rgb(164,215,253) 0%,rgb(180,215,252) 10%,rgb(196,215,251) 20%,rgb(212,215,250) 30%,rgb(228,215,249) 40%,rgb(244,214,248) 50%,rgb(246,203,234) 60%,rgb(248,192,221) 70%,rgb(250,182,208) 80%,rgb(252,171,195) 90%,rgb(255,160,182) 100%)"></div><div class="a" style="left:0;top:148.25px;width:100%;height:6.53px;background:linear-gradient(90deg,rgb(164,212,253) 0%,rgb(180,211,252) 10%,rgb(196,211,251) 20%,rgb(212,211,249) 30%,rgb(228,211,248) 40%,rgb(244,211,247) 50%,rgb(246,200,234) 60%,rgb(248,189,221) 70%,rgb(250,178,208) 80%,rgb(252,167,195) 90%,rgb(255,157,182) 100%)"></div><div class="a" style="left:0;top:154.18px;width:100%;height:6.53px;background:linear-gradient(90deg,rgb(165,208,253) 0%,rgb(180,208,252) 10%,rgb(196,208,250) 20%,rgb(212,207,249) 30%,rgb(228,207,248) 40%,rgb(244,207,246) 50%,rgb(246,196,233) 60%,rgb(248,186,221) 70%,rgb(250,175,208) 80%,rgb(252,164,195) 90%,rgb(255,154,183) 100%)"></div><div class="a" style="left:0;top:160.11px;width:100%;height:6.53px;background:linear-gradient(90deg,rgb(165,205,254) 0%,rgb(181,204,252) 10%,rgb(196,204,250) 20%,rgb(212,204,249) 30%,rgb(228,203,247) 40%,rgb(244,203,245) 50%,rgb(246,193,233) 60%,rgb(248,182,220) 70%,rgb(250,172,208) 80%,rgb(252,161,195) 90%,rgb(255,151,183) 100%)"></div><div class="a" style="left:0;top:166.04px;width:100%;height:6.53px;background:linear-gradient(90deg,rgb(165,201,254) 0%,rgb(181,201,252) 10%,rgb(196,200,250) 20%,rgb(212,200,248) 30%,rgb(228,200,246) 40%,rgb(244,199,245) 50%,rgb(246,189,232) 60%,rgb(248,179,220) 70%,rgb(250,168,208) 80%,rgb(252,158,195) 90%,rgb(255,148,183) 100%)"></div><div class="a" style="left:0;top:171.97px;width:100%;height:6.53px;background:linear-gradient(90deg,rgb(165,197,254) 0%,rgb(181,197,252) 10%,rgb(197,197,250) 20%,rgb(212,196,248) 30%,rgb(228,196,246) 40%,rgb(244,195,244) 50%,rgb(246,185,232) 60%,rgb(248,175,220) 70%,rgb(250,165,208) 80%,rgb(252,155,195) 90%,rgb(255,145,183) 100%)"></div></div>
<div class="a" style="left:583.0px;top:744.8px;width:246.0px;height:177.9000000000001px;background:radial-gradient(ellipse 70px 60px at 195px 10px,rgba(255,255,190,0.75),rgba(255,255,190,0) 100%)"></div>
<div class="a" style="left:583.0px;top:744.8px;width:246.0px;height:177.9000000000001px;box-shadow:inset 1px 1px 1px rgba(0,0,0,0.5)"></div>
<svg style="left:0;top:0" width="1912" height="1050"><path d="M615.4 922.7 L829 774.9" stroke="#000" stroke-width="3"/><rect x="699.7" y="827.1" width="12.3" height="12.6" fill="none" stroke="#000" stroke-width="1.8"/><circle cx="716.8" cy="810.9" r="4.5" fill="#1e1e1e" stroke="#111" stroke-width="1.4"/><circle cx="709.1" cy="821.9" r="4.5" fill="#454545" stroke="#111" stroke-width="1.4"/><circle cx="701.2" cy="832.4" r="4.5" fill="#777" stroke="#111" stroke-width="1.4"/><circle cx="703.5" cy="828.0" r="4.5" fill="#8a8a8a" stroke="#111" stroke-width="1.4"/><circle cx="692.4" cy="823.4" r="4.5" fill="#a8a8a8" stroke="#111" stroke-width="1.4"/><circle cx="701.2" cy="825.7" r="4.5" fill="#e2e2e2" stroke="#111" stroke-width="1.4"/><circle cx="701.2" cy="819.7" r="4.5" fill="#fcfcfc" stroke="#111" stroke-width="1.4"/><path d="M576.8 758.40 H583" stroke="#d0d0d0" stroke-width="1.5"/><path d="M576.8 793.90 H583" stroke="#d0d0d0" stroke-width="1.5"/><path d="M576.8 829.40 H583" stroke="#d0d0d0" stroke-width="1.5"/><path d="M576.8 864.90 H583" stroke="#d0d0d0" stroke-width="1.5"/><path d="M576.8 900.40 H583" stroke="#d0d0d0" stroke-width="1.5"/><path d="M593.50 922.7 V928.2" stroke="#d0d0d0" stroke-width="1.5"/><path d="M642.50 922.7 V928.2" stroke="#d0d0d0" stroke-width="1.5"/><path d="M691.50 922.7 V928.2" stroke="#d0d0d0" stroke-width="1.5"/><path d="M740.50 922.7 V928.2" stroke="#d0d0d0" stroke-width="1.5"/><path d="M789.50 922.7 V928.2" stroke="#d0d0d0" stroke-width="1.5"/></svg>
<span class="t" style="left:546.87px;top:751px;font-size:15.70px;color:#dcdcdc;letter-spacing:-0.059px">0,35</span>
<span class="t" style="left:546.87px;top:786px;font-size:15.70px;color:#dcdcdc;letter-spacing:-0.137px">0,34</span>
<span class="t" style="left:546.87px;top:822px;font-size:15.70px;color:#dcdcdc;letter-spacing:-0.059px">0,33</span>
<span class="t" style="left:546.87px;top:857px;font-size:15.70px;color:#dcdcdc">0,32</span>
<span class="t" style="left:546.87px;top:893px;font-size:15.70px;color:#dcdcdc;letter-spacing:-0.033px">0,31</span>
<span class="t" style="left:578.70px;top:931px;font-size:15.26px;color:#dcdcdc">0,29</span>
<span class="t" style="left:631.89px;top:931px;font-size:15.26px;color:#dcdcdc">0,3</span>
<span class="t" style="left:676.70px;top:931px;font-size:15.26px;color:#dcdcdc">0,31</span>
<span class="t" style="left:725.73px;top:931px;font-size:15.26px;color:#dcdcdc">0,32</span>
<span class="t" style="left:774.66px;top:931px;font-size:15.26px;color:#dcdcdc">0,33</span>
<div class="a" style="left:840.0px;top:735px;width:898.0px;height:216px;background:#3d3d3d;border-top:1px solid #000;border-right:1px solid #1e1e1e"></div>
<div class="a" style="left:840.0px;top:736px;width:897.0px;height:14.7px;background:#2e2e2e"></div>
<div class="a" style="left:840.0px;top:750.7px;width:897.0px;height:13.9px;background:#141414"></div>
<div class="a" style="left:840.0px;top:764.60px;width:897.0px;height:26.93px;background:#3d3d3d"></div>
<div class="a" style="left:840.0px;top:791.23px;width:897.0px;height:26.93px;background:#7b7b7b"></div>
<div class="a" style="left:840.0px;top:817.86px;width:897.0px;height:26.93px;background:#3d3d3d"></div>
<div class="a" style="left:840.0px;top:844.49px;width:897.0px;height:26.93px;background:#7b7b7b"></div>
<div class="a" style="left:840.0px;top:871.11px;width:897.0px;height:26.93px;background:#3d3d3d"></div>
<div class="a" style="left:840.0px;top:897.74px;width:897.0px;height:26.93px;background:#7b7b7b"></div>
<div class="a" style="left:840.0px;top:924.37px;width:897.0px;height:26.93px;background:#3d3d3d"></div>
<span class="t" style="left:1030.69px;top:743px;font-size:15.41px;color:#f4f4f4">0</span>
<span class="t" style="left:1097.84px;top:743px;font-size:15.41px;color:#f4f4f4">10</span>
<span class="t" style="left:1164.33px;top:743px;font-size:15.41px;color:#f4f4f4">20</span>
<span class="t" style="left:1230.45px;top:743px;font-size:15.41px;color:#f4f4f4">30</span>
<span class="t" style="left:1297.56px;top:743px;font-size:15.41px;color:#f4f4f4">40</span>
<span class="t" style="left:1363.71px;top:743px;font-size:15.41px;color:#f4f4f4">50</span>
<span class="t" style="left:1430.03px;top:743px;font-size:15.41px;color:#f4f4f4">60</span>
<span class="t" style="left:1496.33px;top:743px;font-size:15.41px;color:#f4f4f4">70</span>
<span class="t" style="left:1563.11px;top:743px;font-size:15.41px;color:#f4f4f4">80</span>
<span class="t" style="left:1629.37px;top:743px;font-size:15.41px;color:#f4f4f4">90</span>
<span class="t" style="left:1691.87px;top:743px;font-size:15.41px;color:#f4f4f4">100</span>
<span class="t" style="left:852.82px;top:772px;font-size:15.99px;color:#f4f4f4;font-weight:700;-webkit-text-stroke:0">x: CIE31</span>
<span class="t" style="left:1000.94px;top:771px;font-size:16.42px;color:#f0f0f0">0,50</span>
<span class="t" style="left:1076.84px;top:771px;font-size:16.42px;color:#f0f0f0">0,32</span>
<span class="t" style="left:1143.24px;top:771px;font-size:16.42px;color:#f0f0f0">0,31</span>
<span class="t" style="left:1209.64px;top:771px;font-size:16.42px;color:#f0f0f0">0,31</span>
<span class="t" style="left:1276.24px;top:771px;font-size:16.42px;color:#f0f0f0">0,31</span>
<span class="t" style="left:1342.94px;top:771px;font-size:16.42px;color:#f0f0f0">0,31</span>
<span class="t" style="left:1409.34px;top:771px;font-size:16.42px;color:#f0f0f0">0,31</span>
<span class="t" style="left:1475.84px;top:771px;font-size:16.42px;color:#f0f0f0">0,31</span>
<span class="t" style="left:1542.34px;top:771px;font-size:16.42px;color:#f0f0f0">0,31</span>
<span class="t" style="left:1608.84px;top:771px;font-size:16.42px;color:#f0f0f0">0,31</span>
<span class="t" style="left:1675.34px;top:771px;font-size:16.42px;color:#f0f0f0">0,31</span>
<span class="t" style="left:852.82px;top:798px;font-size:15.99px;color:#f4f4f4;font-weight:700;-webkit-text-stroke:0">y: CIE31</span>
<span class="t" style="left:1000.94px;top:797px;font-size:16.42px;color:#f0f0f0">0,21</span>
<span class="t" style="left:1076.84px;top:797px;font-size:16.42px;color:#f0f0f0">0,34</span>
<span class="t" style="left:1143.24px;top:797px;font-size:16.42px;color:#f0f0f0">0,33</span>
<span class="t" style="left:1209.64px;top:797px;font-size:16.42px;color:#f0f0f0">0,33</span>
<span class="t" style="left:1276.24px;top:797px;font-size:16.42px;color:#f0f0f0">0,33</span>
<span class="t" style="left:1342.94px;top:797px;font-size:16.42px;color:#f0f0f0">0,33</span>
<span class="t" style="left:1409.34px;top:797px;font-size:16.42px;color:#f0f0f0">0,33</span>
<span class="t" style="left:1475.84px;top:797px;font-size:16.42px;color:#f0f0f0">0,33</span>
<span class="t" style="left:1542.34px;top:797px;font-size:16.42px;color:#f0f0f0">0,33</span>
<span class="t" style="left:1608.84px;top:797px;font-size:16.42px;color:#f0f0f0">0,33</span>
<span class="t" style="left:1675.34px;top:797px;font-size:16.42px;color:#f0f0f0">0,33</span>
<span class="t" style="left:852.66px;top:825px;font-size:15.99px;color:#f4f4f4;font-weight:700;-webkit-text-stroke:0">Y</span>
<span class="t" style="left:1000.94px;top:824px;font-size:16.42px;color:#f0f0f0">0,01</span>
<span class="t" style="left:1076.93px;top:824px;font-size:16.42px;color:#f0f0f0">3,21</span>
<span class="t" style="left:1142.67px;top:824px;font-size:16.42px;color:#f0f0f0">12,38</span>
<span class="t" style="left:1209.48px;top:824px;font-size:16.42px;color:#f0f0f0">26,58</span>
<span class="t" style="left:1276.57px;top:824px;font-size:16.42px;color:#f0f0f0">48,89</span>
<span class="t" style="left:1342.78px;top:824px;font-size:16.42px;color:#f0f0f0">79,65</span>
<span class="t" style="left:1408.77px;top:824px;font-size:16.42px;color:#f0f0f0">119,85</span>
<span class="t" style="left:1475.27px;top:824px;font-size:16.42px;color:#f0f0f0">167,84</span>
<span class="t" style="left:1542.18px;top:824px;font-size:16.42px;color:#f0f0f0">227,53</span>
<span class="t" style="left:1608.68px;top:824px;font-size:16.42px;color:#f0f0f0">296,45</span>
<span class="t" style="left:1675.43px;top:824px;font-size:16.42px;color:#f0f0f0">372,45</span>
<span class="t" style="left:852.74px;top:851px;font-size:15.99px;color:#f4f4f4;font-weight:700;-webkit-text-stroke:0">Target Y</span>
<span class="t" style="left:1000.94px;top:850px;font-size:16.42px;color:#f0f0f0">0,00</span>
<span class="t" style="left:1076.93px;top:850px;font-size:16.42px;color:#f0f0f0">3,85</span>
<span class="t" style="left:1142.67px;top:850px;font-size:16.42px;color:#f0f0f0">12,33</span>
<span class="t" style="left:1209.48px;top:850px;font-size:16.42px;color:#f0f0f0">26,92</span>
<span class="t" style="left:1276.57px;top:850px;font-size:16.42px;color:#f0f0f0">49,49</span>
<span class="t" style="left:1342.94px;top:850px;font-size:16.42px;color:#f0f0f0">80,40</span>
<span class="t" style="left:1408.77px;top:850px;font-size:16.42px;color:#f0f0f0">118,64</span>
<span class="t" style="left:1475.27px;top:850px;font-size:16.42px;color:#f0f0f0">165,82</span>
<span class="t" style="left:1542.18px;top:850px;font-size:16.42px;color:#f0f0f0">224,90</span>
<span class="t" style="left:1608.68px;top:850px;font-size:16.42px;color:#f0f0f0">294,72</span>
<span class="t" style="left:1675.43px;top:850px;font-size:16.42px;color:#f0f0f0">372,45</span>
<span class="t" style="left:852.26px;top:878px;font-size:15.99px;color:#f4f4f4;font-weight:700;-webkit-text-stroke:0">Gamma Log/Log</span>
<span class="t" style="left:1000.37px;top:877px;font-size:16.42px;color:#f0f0f0">1,28</span>
<span class="t" style="left:1076.68px;top:877px;font-size:16.42px;color:#f0f0f0">2,08</span>
<span class="t" style="left:1143.08px;top:877px;font-size:16.42px;color:#f0f0f0">2,11</span>
<span class="t" style="left:1209.48px;top:877px;font-size:16.42px;color:#f0f0f0">2,18</span>
<span class="t" style="left:1276.08px;top:877px;font-size:16.42px;color:#f0f0f0">2,22</span>
<span class="t" style="left:1342.78px;top:877px;font-size:16.42px;color:#f0f0f0">2,24</span>
<span class="t" style="left:1409.18px;top:877px;font-size:16.42px;color:#f0f0f0">2,22</span>
<span class="t" style="left:1475.68px;top:877px;font-size:16.42px;color:#f0f0f0">2,22</span>
<span class="t" style="left:1542.18px;top:877px;font-size:16.42px;color:#f0f0f0">2,21</span>
<span class="t" style="left:1608.68px;top:877px;font-size:16.42px;color:#f0f0f0">2,21</span>
<span class="t" style="left:1675.18px;top:877px;font-size:16.42px;color:#f0f0f0">2,27</span>
<span class="t" style="left:852.26px;top:905px;font-size:15.99px;color:#f4f4f4;font-weight:700;-webkit-text-stroke:0">CCT</span>
<span class="t" style="left:1000.37px;top:904px;font-size:16.42px;color:#f0f0f0">1456,00</span>
<span class="t" style="left:1076.68px;top:904px;font-size:16.42px;color:#f0f0f0">6337,00</span>
<span class="t" style="left:1143.08px;top:904px;font-size:16.42px;color:#f0f0f0">6456,00</span>
<span class="t" style="left:1209.48px;top:904px;font-size:16.42px;color:#f0f0f0">6626,00</span>
<span class="t" style="left:1276.08px;top:904px;font-size:16.42px;color:#f0f0f0">6548,00</span>
<span class="t" style="left:1342.78px;top:904px;font-size:16.42px;color:#f0f0f0">6513,00</span>
<span class="t" style="left:1409.18px;top:904px;font-size:16.42px;color:#f0f0f0">6617,00</span>
<span class="t" style="left:1475.68px;top:904px;font-size:16.42px;color:#f0f0f0">6625,00</span>
<span class="t" style="left:1542.18px;top:904px;font-size:16.42px;color:#f0f0f0">6528,00</span>
<span class="t" style="left:1608.68px;top:904px;font-size:16.42px;color:#f0f0f0">6531,00</span>
<span class="t" style="left:1675.18px;top:904px;font-size:16.42px;color:#f0f0f0">6516,00</span>
<span class="t" style="left:852.26px;top:931px;font-size:15.99px;color:#f4f4f4;font-weight:700;-webkit-text-stroke:0">ΔE 2000</span>
<span class="t" style="left:1000.94px;top:930px;font-size:16.42px;color:#f0f0f0">0,12</span>
<span class="t" style="left:1076.27px;top:930px;font-size:16.42px;color:#f0f0f0">1,22</span>
<span class="t" style="left:1143.24px;top:930px;font-size:16.42px;color:#f0f0f0">0,71</span>
<span class="t" style="left:1209.07px;top:930px;font-size:16.42px;color:#f0f0f0">1,86</span>
<span class="t" style="left:1276.24px;top:930px;font-size:16.42px;color:#f0f0f0">0,47</span>
<span class="t" style="left:1342.37px;top:930px;font-size:16.42px;color:#f0f0f0">1,06</span>
<span class="t" style="left:1409.18px;top:930px;font-size:16.42px;color:#f0f0f0">2,88</span>
<span class="t" style="left:1475.93px;top:930px;font-size:16.42px;color:#f0f0f0">3,07</span>
<span class="t" style="left:1542.18px;top:930px;font-size:16.42px;color:#f0f0f0">2,55</span>
<span class="t" style="left:1608.68px;top:930px;font-size:16.42px;color:#f0f0f0">2,24</span>
<span class="t" style="left:1675.43px;top:930px;font-size:16.42px;color:#f0f0f0">3,32</span>
<div class="a" style="left:201.00px;top:988px;width:125px;height:62px;border-radius:4px 4px 0 0;background:linear-gradient(#9a9a9a,#8a8a8a 8%,#7a7a7a 60%,#5e5e5e);box-shadow:inset 0 1px 0 #b0b0b0"></div>
<div class="a" style="left:206.00px;top:993px;width:114.8px;height:35.6px;border-radius:4px;background:#000000;box-shadow:inset 0 1px 1px rgba(0,0,0,0.5),0 1px 0 rgba(255,255,255,0.25)"></div>
<span class="t" style="left:260.33px;top:1035px;font-size:11.34px;color:#262626">0</span>
<div class="a" style="left:327.75px;top:988px;width:125px;height:62px;border-radius:4px 4px 0 0;background:linear-gradient(#9a9a9a,#8a8a8a 8%,#7a7a7a 60%,#5e5e5e);box-shadow:inset 0 1px 0 #b0b0b0"></div>
<div class="a" style="left:332.75px;top:993px;width:114.8px;height:35.6px;border-radius:4px;background:#1b1b1b;box-shadow:inset 0 1px 1px rgba(0,0,0,0.5),0 1px 0 rgba(255,255,255,0.25)"></div>
<span class="t" style="left:383.73px;top:1035px;font-size:11.34px;color:#262626">10</span>
<div class="a" style="left:454.50px;top:988px;width:125px;height:62px;border-radius:4px 4px 0 0;background:linear-gradient(#9a9a9a,#8a8a8a 8%,#7a7a7a 60%,#5e5e5e);box-shadow:inset 0 1px 0 #b0b0b0"></div>
<div class="a" style="left:459.50px;top:993px;width:114.8px;height:35.6px;border-radius:4px;background:#333333;box-shadow:inset 0 1px 1px rgba(0,0,0,0.5),0 1px 0 rgba(255,255,255,0.25)"></div>
<span class="t" style="left:510.62px;top:1035px;font-size:11.34px;color:#262626">20</span>
<div class="a" style="left:581.25px;top:988px;width:125px;height:62px;border-radius:4px 4px 0 0;background:linear-gradient(#9a9a9a,#8a8a8a 8%,#7a7a7a 60%,#5e5e5e);box-shadow:inset 0 1px 0 #b0b0b0"></div>
<div class="a" style="left:586.25px;top:993px;width:114.8px;height:35.6px;border-radius:4px;background:#4c4c4c;box-shadow:inset 0 1px 1px rgba(0,0,0,0.5),0 1px 0 rgba(255,255,255,0.25)"></div>
<span class="t" style="left:637.46px;top:1035px;font-size:11.34px;color:#262626">30</span>
<div class="a" style="left:708.00px;top:988px;width:125px;height:62px;border-radius:4px 4px 0 0;background:linear-gradient(#9a9a9a,#8a8a8a 8%,#7a7a7a 60%,#5e5e5e);box-shadow:inset 0 1px 0 #b0b0b0"></div>
<div class="a" style="left:713.00px;top:993px;width:114.8px;height:35.6px;border-radius:4px;background:#666666;box-shadow:inset 0 1px 1px rgba(0,0,0,0.5),0 1px 0 rgba(255,255,255,0.25)"></div>
<span class="t" style="left:764.29px;top:1035px;font-size:11.34px;color:#262626">40</span>
<div class="a" style="left:834.75px;top:988px;width:125px;height:62px;border-radius:4px 4px 0 0;background:linear-gradient(#9a9a9a,#8a8a8a 8%,#7a7a7a 60%,#5e5e5e);box-shadow:inset 0 1px 0 #b0b0b0"></div>
<div class="a" style="left:839.75px;top:993px;width:114.8px;height:35.6px;border-radius:4px;background:#808080;box-shadow:inset 0 1px 1px rgba(0,0,0,0.5),0 1px 0 rgba(255,255,255,0.25)"></div>
<span class="t" style="left:890.93px;top:1035px;font-size:11.34px;color:#262626">50</span>
<div class="a" style="left:961.50px;top:988px;width:125px;height:62px;border-radius:4px 4px 0 0;background:linear-gradient(#9a9a9a,#8a8a8a 8%,#7a7a7a 60%,#5e5e5e);box-shadow:inset 0 1px 0 #b0b0b0"></div>
<div class="a" style="left:966.50px;top:993px;width:114.8px;height:35.6px;border-radius:4px;background:#999999;box-shadow:inset 0 1px 1px rgba(0,0,0,0.5),0 1px 0 rgba(255,255,255,0.25)"></div>
<span class="t" style="left:1017.62px;top:1035px;font-size:11.34px;color:#262626">60</span>
<div class="a" style="left:1088.25px;top:988px;width:125px;height:62px;border-radius:4px 4px 0 0;background:linear-gradient(#9a9a9a,#8a8a8a 8%,#7a7a7a 60%,#5e5e5e);box-shadow:inset 0 1px 0 #b0b0b0"></div>
<div class="a" style="left:1093.25px;top:993px;width:114.8px;height:35.6px;border-radius:4px;background:#b3b3b3;box-shadow:inset 0 1px 1px rgba(0,0,0,0.5),0 1px 0 rgba(255,255,255,0.25)"></div>
<span class="t" style="left:1144.37px;top:1035px;font-size:11.34px;color:#262626">70</span>
<div class="a" style="left:1215.00px;top:988px;width:125px;height:62px;border-radius:4px 4px 0 0;background:linear-gradient(#9a9a9a,#8a8a8a 8%,#7a7a7a 60%,#5e5e5e);box-shadow:inset 0 1px 0 #b0b0b0"></div>
<div class="a" style="left:1220.00px;top:993px;width:114.8px;height:35.6px;border-radius:4px;background:#cccccc;box-shadow:inset 0 1px 1px rgba(0,0,0,0.5),0 1px 0 rgba(255,255,255,0.25)"></div>
<span class="t" style="left:1271.18px;top:1035px;font-size:11.34px;color:#262626">80</span>
<div class="a" style="left:1341.75px;top:988px;width:125px;height:62px;border-radius:4px 4px 0 0;background:linear-gradient(#9a9a9a,#8a8a8a 8%,#7a7a7a 60%,#5e5e5e);box-shadow:inset 0 1px 0 #b0b0b0"></div>
<div class="a" style="left:1346.75px;top:993px;width:114.8px;height:35.6px;border-radius:4px;background:#e6e6e6;box-shadow:inset 0 1px 1px rgba(0,0,0,0.5),0 1px 0 rgba(255,255,255,0.25)"></div>
<span class="t" style="left:1397.90px;top:1035px;font-size:11.34px;color:#262626">90</span>
<div class="a" style="left:1468.50px;top:988px;width:125px;height:62px;border-radius:4px 4px 0 0;background:linear-gradient(#1c1c1c,#242424 55%,#303030)"></div>
<div class="a" style="left:1473.50px;top:993px;width:114.8px;height:35.6px;border-radius:4px;background:#fff"></div>
<span class="t" style="left:1521.20px;top:1034px;font-size:11.63px;color:#fff;font-weight:700;-webkit-text-stroke:0">100</span>
<div class="a" style="left:1596.5px;top:988px;width:48.7px;height:62px;border-radius:4px 4px 0 0;background:linear-gradient(#a8a8a8,#8c8c8c 28%,#4a4a4a 29%,#8e8e8e 31%,#9c9c9c 55%,#777 100%)"></div>
<svg style="left:1596px;top:988px" width="50" height="62"><circle cx="25.6" cy="8" r="7.2" fill="#8a8a8a"/><path d="M21 10.5 L25.6 5.5 L30.2 10.5Z" fill="#3a3a3a"/><rect x="9.9" y="24.8" width="29.8" height="29.8" rx="4" fill="#b4b4b4" stroke="#1e1e1e" stroke-width="1.8"/><rect x="18.1" y="33.2" width="13.6" height="13.3" fill="#000"/><rect x="18.1" y="33.2" width="13.6" height="6.5" fill="#1e1e1e"/></svg>
<div class="a" style="left:1646px;top:988px;width:266px;height:30.3px;background:linear-gradient(#b0b0b0,#8c8c8c 55%,#707070)"></div>
<div class="a" style="left:1691.9px;top:988px;width:1px;height:30.3px;background:#2a2a2a"></div>
<div class="a" style="left:1736.9px;top:988px;width:1px;height:30.3px;background:#2a2a2a"></div>
<div class="a" style="left:1781.7px;top:988px;width:1px;height:30.3px;background:#2a2a2a"></div>
<div class="a" style="left:1826.5px;top:988px;width:1px;height:30.3px;background:#2a2a2a"></div>
<div class="a" style="left:1872.0px;top:988px;width:1px;height:30.3px;background:#2a2a2a"></div>
<svg style="left:1646px;top:988px" width="266" height="62"><defs><linearGradient id="cg1" x1="0" y1="0" x2="0" y2="1"><stop offset="0" stop-color="#6e6e6e"/><stop offset="1" stop-color="#c8c8c8"/></linearGradient><linearGradient id="cg2" x1="0" y1="0" x2="0" y2="1"><stop offset="0" stop-color="#8c8c8c"/><stop offset="1" stop-color="#b4b4b4"/></linearGradient></defs><circle cx="22.5" cy="14.9" r="9.8" fill="url(#cg1)" opacity="0.85"/><circle cx="22.5" cy="14.9" r="8" fill="url(#cg2)"/><circle cx="69.2" cy="14.9" r="9.8" fill="url(#cg1)" opacity="0.85"/><circle cx="69.2" cy="14.9" r="8" fill="url(#cg2)"/><circle cx="114.0" cy="14.9" r="9.8" fill="url(#cg1)" opacity="0.85"/><circle cx="114.0" cy="14.9" r="8" fill="url(#cg2)"/><circle cx="158.8" cy="14.9" r="9.8" fill="url(#cg1)" opacity="0.85"/><circle cx="158.8" cy="14.9" r="8" fill="url(#cg2)"/><circle cx="203.6" cy="14.9" r="9.8" fill="url(#cg1)" opacity="0.85"/><circle cx="203.6" cy="14.9" r="8" fill="url(#cg2)"/><circle cx="247.5" cy="14.9" r="9.8" fill="url(#cg1)" opacity="0.85"/><circle cx="247.5" cy="14.9" r="8" fill="url(#cg2)"/><rect x="18.6" y="11.2" width="7.8" height="7.8" fill="#383838"/><path d="M66.2 10.4 L73.6 15 L66.2 19.6Z" fill="#2e2e2e"/><path d="M110.2 10 h-1.6 v10 h1.6 M117.8 10 h1.6 v10 h-1.6" fill="none" stroke="#2e2e2e" stroke-width="1.5"/><rect x="111.6" y="13.6" width="1.7" height="1.7" fill="#2e2e2e"/><rect x="114.6" y="13.6" width="1.7" height="1.7" fill="#2e2e2e"/><path d="M155.0 15 c-2.5 -3.5 -5.5 -1.8 -5.5 0 c0 1.8 3 3.5 5.5 0 c2.5 -3.5 5.5 -1.8 5.5 0 c0 1.8 -3 3.5 -5.5 0" fill="none" stroke="#2e2e2e" stroke-width="1.6"/><path d="M199.3 13.5 a5 5 0 0 1 8.6 -1.2 M207.9 16.3 a5 5 0 0 1 -8.6 1.2" fill="none" stroke="#2e2e2e" stroke-width="1.7"/><path d="M208.5 9.5 v4 h-4z M198.7 20.3 v-4 h4z" fill="#2e2e2e"/></svg>
<div class="a" style="left:1646px;top:1019.3px;width:266px;height:30.7px;border-radius:4px 0 0 0;background:linear-gradient(#b2b2b2,#a0a0a0 50%,#8a8a8a)"></div>
<div class="a" style="left:1646px;top:1018.3px;width:266px;height:1px;background:#2a2a2a"></div>
<div class="a" style="left:1781.7px;top:1019.3px;width:1px;height:30.7px;background:#3a3a3a"></div>
<svg style="left:1646px;top:1019px" width="266" height="31"><circle cx="30.5" cy="14.7" r="9.8" fill="url(#cg1)" opacity="0.85"/><circle cx="30.5" cy="14.7" r="8" fill="url(#cg2)"/><path d="M30.5 10.5 L26.8 14.9 L30.5 19.3 M34 10.5 L30.3 14.9 L34 19.3" fill="none" stroke="#2a2a2a" stroke-width="1.6"/><circle cx="244" cy="14.7" r="9.8" fill="url(#cg1)" opacity="0.85"/><circle cx="244" cy="14.7" r="8" fill="url(#cg2)"/><path d="M240.5 10.5 L244.2 14.9 L240.5 19.3 M244 10.5 L247.7 14.9 L244 19.3" fill="none" stroke="#2a2a2a" stroke-width="1.6"/></svg>
<span class="t" style="left:1702.53px;top:1023px;font-size:22.67px;color:#2c2c2c;font-weight:700;-webkit-text-stroke:0;letter-spacing:-0.973px">Back</span>
<span class="t" style="left:1809.11px;top:1023px;font-size:22.67px;color:#2c2c2c;font-weight:700;-webkit-text-stroke:0;transform-origin:0 0;transform:scaleX(1.0804)">Next</span>
</body></html>
